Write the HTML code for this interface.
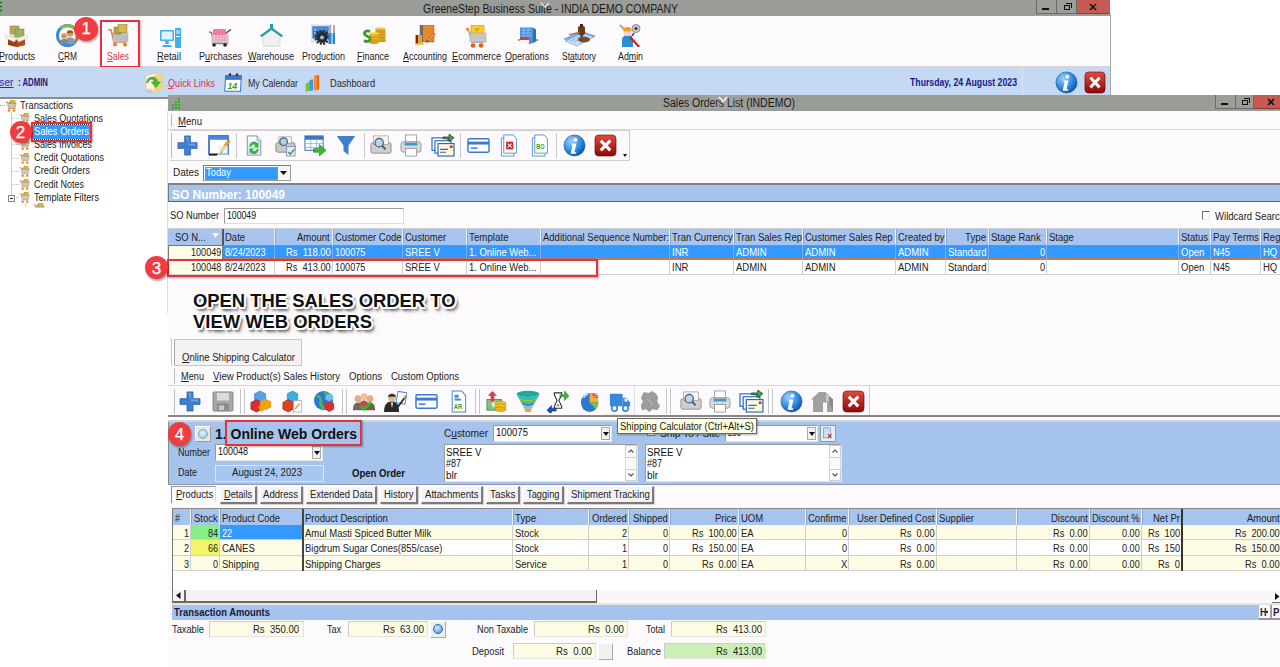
<!DOCTYPE html><html><head><meta charset="utf-8"><style>*{margin:0;padding:0}
html,body{width:1280px;height:667px;overflow:hidden;background:#fdfafd}
body{position:relative;font-family:"Liberation Sans",sans-serif}
.t{position:absolute;white-space:pre}
.r{position:absolute}
u{text-decoration:underline}
</style></head><body><div class="r" style="left:0px;top:0px;width:1110px;height:16px;background:#9a9c98;"></div><div class="r" style="left:0px;top:2px;width:2px;height:12px;background:#3a3a3a;"></div><div class="r" style="left:0px;top:3px;width:1.5px;height:3px;background:#4cc84c;"></div><div class="r" style="left:0px;top:7px;width:1.5px;height:3px;background:#4cc84c;"></div><div class="r" style="left:0px;top:11px;width:1.5px;height:2.5px;background:#4cc84c;"></div><div class="t" style="left:423.00px;top:3.34px;font-size:12px;line-height:12px;transform:scaleX(0.8736);transform-origin:0 0;color:#1a1a1a;">GreeneStep Business Suite - INDIA DEMO COMPANY</div><svg class="r" style="left:540px;top:2px;" width="10" height="6" viewBox="0 0 10 6"><path d="M1 1l4 4 4-4" stroke="#e8e8e8" stroke-width="1.3" fill="none"/></svg><div class="r" style="left:1036px;top:0px;width:21px;height:14px;background:#9c9e9a;border:1px solid #6a6c68;box-sizing:border-box;border-top:none;"></div><div class="r" style="left:1056px;top:0px;width:21px;height:14px;background:#9c9e9a;border:1px solid #6a6c68;box-sizing:border-box;border-top:none;"></div><div class="r" style="left:1077px;top:0px;width:33px;height:14px;background:#c75a52;border-bottom:1px solid #8a3a34;box-sizing:border-box;"></div><div class="r" style="left:1042px;top:8px;width:7px;height:2px;background:#111;"></div><div class="r" style="left:1064px;top:5px;width:6px;height:5px;border:1.5px solid #111;box-sizing:border-box;"></div><div class="r" style="left:1066px;top:3px;width:6px;height:5px;border-top:1.5px solid #111;border-right:1.5px solid #111;box-sizing:border-box;"></div><svg class="r" style="left:1089px;top:3px;" width="8" height="8" viewBox="0 0 8 8"><path d="M1 1L7 7M7 1L1 7" stroke="#111" stroke-width="1.6"/></svg><div class="r" style="left:1110px;top:0px;width:170px;height:95px;background:#ffffff;"></div><div class="r" style="left:1109px;top:14px;width:2px;height:81px;background:#a8a8a8;"></div><div class="r" style="left:0px;top:16px;width:1110px;height:50px;background:#fdfafd;"></div><div class="r" style="left:0px;top:66px;width:1110px;height:1px;background:#d4d4d4;"></div><div class="t" style="left:-1.00px;top:51.53px;font-size:10px;line-height:10px;transform:scaleX(0.9122);transform-origin:0 0;color:#222;"><u>P</u>roducts</div><div class="t" style="left:57.50px;top:51.53px;font-size:10px;line-height:10px;transform:scaleX(0.8343);transform-origin:0 0;color:#222;"><u>C</u>RM</div><div class="t" style="left:107.00px;top:51.53px;font-size:10px;line-height:10px;transform:scaleX(0.8795);transform-origin:0 0;color:#e8384a;"><u>S</u>ales</div><div class="t" style="left:157.00px;top:51.53px;font-size:10px;line-height:10px;transform:scaleX(0.9387);transform-origin:0 0;color:#222;"><u>R</u>etail</div><div class="t" style="left:198.50px;top:51.53px;font-size:10px;line-height:10px;transform:scaleX(0.9101);transform-origin:0 0;color:#222;">P<u>u</u>rchases</div><div class="t" style="left:248.00px;top:51.53px;font-size:10px;line-height:10px;transform:scaleX(0.9061);transform-origin:0 0;color:#222;"><u>W</u>arehouse</div><div class="t" style="left:301.50px;top:51.53px;font-size:10px;line-height:10px;transform:scaleX(0.8994);transform-origin:0 0;color:#222;">Pro<u>d</u>uction</div><div class="t" style="left:357.00px;top:51.53px;font-size:10px;line-height:10px;transform:scaleX(0.8994);transform-origin:0 0;color:#222;"><u>F</u>inance</div><div class="t" style="left:403.00px;top:51.53px;font-size:10px;line-height:10px;transform:scaleX(0.8893);transform-origin:0 0;color:#222;"><u>A</u>ccounting</div><div class="t" style="left:451.50px;top:51.53px;font-size:10px;line-height:10px;transform:scaleX(0.9185);transform-origin:0 0;color:#222;"><u>E</u>commerce</div><div class="t" style="left:505.00px;top:51.53px;font-size:10px;line-height:10px;transform:scaleX(0.8995);transform-origin:0 0;color:#222;"><u>O</u>perations</div><div class="t" style="left:562.00px;top:51.53px;font-size:10px;line-height:10px;transform:scaleX(0.8496);transform-origin:0 0;color:#222;">St<u>a</u>tutory</div><div class="t" style="left:617.50px;top:51.53px;font-size:10px;line-height:10px;transform:scaleX(0.8820);transform-origin:0 0;color:#222;">Ad<u>m</u>in</div><svg class="r" style="left:5px;top:25px" width="23" height="22" viewBox="0 0 23 22"><path d="M3 11l8.5-3 8.5 3-8.5 4z" fill="#e8dcc0"/><rect x="5" y="1" width="9" height="8" fill="#b8a468" stroke="#8a7a40" stroke-width=".5"/><rect x="10" y="4" width="9" height="8" fill="#9cb060" stroke="#6a8030" stroke-width=".5"/><path d="M3 12l8.5 3 8.5-3v8l-8.5 2-8.5-2z" fill="#a03c14"/><path d="M11.5 15v7l8.5-2v-8z" fill="#b84a1a"/><path d="M0 9.5l11.5 4-2 3.5L0 13zM23 9.5l-11.5 4 2 3.5L23 13z" fill="#f4efe4" stroke="#d4ccbc" stroke-width=".4"/></svg><svg class="r" style="left:56px;top:24px" width="23" height="23" viewBox="0 0 23 23"><circle cx="11.5" cy="11.5" r="10" fill="none" stroke="#3a8ad8" stroke-width="3"/><path d="M4.5 4.5a10 10 0 0 1 14 0" stroke="#7ac040" stroke-width="3" fill="none"/><path d="M21 8a10 10 0 0 1-1.5 9" stroke="#e87a20" stroke-width="3" fill="none"/><circle cx="14" cy="9.5" r="3.3" fill="#e0a060"/><path d="M14 6.2a3.3 3.3 0 0 1 3.3 3h-6.6a3.3 3.3 0 0 1 3.3-3z" fill="#a05a20"/><path d="M8.5 20c0-5 2-6.5 5.5-6.5s5.5 1.5 5.5 6.5z" fill="#8a9aaa"/><circle cx="8" cy="12" r="2.8" fill="#d89060"/><path d="M4 20c0-4 1.5-5 4-5s4 1 4 5z" fill="#7a8a9a"/></svg><svg class="r" style="left:107px;top:24px" width="23" height="23" viewBox="0 0 23 23"><path d="M1 5.5l3 .5 3 12h12" fill="none" stroke="#e07a3a" stroke-width="1.5"/><rect x="6" y="9" width="15" height="9" fill="#c4c6c8" stroke="#aaa" stroke-width=".5"/><path d="M7 12h14M7 15h14M10 9v9M13 9v9M16 9v9M19 9v9" stroke="#a8aaac" stroke-width=".5"/><rect x="7" y="3" width="7" height="7" fill="#c0a040" stroke="#8a7020" stroke-width=".5"/><rect x="11" y="0.5" width="9" height="8" fill="#d4b850" stroke="#8a7020" stroke-width=".5"/><circle cx="8" cy="20.5" r="2" fill="#f07a20"/><circle cx="18" cy="20.5" r="2" fill="#f07a20"/></svg><svg class="r" style="left:160px;top:28px" width="21" height="20" viewBox="0 0 21 20"><rect x="0" y="2" width="14" height="11" rx="1" fill="#3ab0f0"/><rect x="1.5" y="3.5" width="11" height="8" fill="#e0f2fc"/><path d="M5.5 13h3l.5 3h-4z" fill="#3ab0f0"/><path d="M3 17h8l1 2H2z" fill="#3ab0f0"/><rect x="15" y="0" width="6" height="20" rx="1" fill="#3ab0f0"/><rect x="16" y="2" width="4" height="4" fill="#8ad4f8"/><rect x="16" y="8" width="4" height="1" fill="#fff"/></svg><svg class="r" style="left:209px;top:28px" width="23" height="19" viewBox="0 0 23 19"><path d="M0 4l2.5.5 2.5 11h14" fill="none" stroke="#777" stroke-width="1.3"/><rect x="3" y="6" width="16" height="9" fill="#e4d0d8" stroke="#999" stroke-width=".6"/><path d="M4 9h15M4 12h15M7 6v9M10 6v9M13 6v9M16 6v9" stroke="#e890b0" stroke-width=".7"/><rect x="4" y="1" width="13" height="6" rx="1.5" fill="#f07aa0"/><path d="M17 5l5-3.5" stroke="#444" stroke-width="1.4"/><circle cx="5" cy="17" r="1.8" fill="#222"/><circle cx="16" cy="17" r="1.8" fill="#222"/></svg><svg class="r" style="left:260px;top:24px" width="23" height="23" viewBox="0 0 23 23"><path d="M3 11l8.5-6 8.5 6v11H3z" fill="#f0f0f0" stroke="#ccc" stroke-width=".6"/><path d="M0 11.5l11.5-8.5 11.5 8.5-1.5 1.8L11.5 6 1.5 13.3z" fill="#20a0a8"/><path d="M10 0h3v5h-3z" fill="#20a0a8"/><path d="M4 22h15" stroke="#ddd" stroke-width="1"/></svg><svg class="r" style="left:311px;top:24px" width="24" height="21" viewBox="0 0 24 21"><rect x="0" y="1" width="20" height="17" fill="#e4e8ee" stroke="#c8ccd0" stroke-width=".6"/><rect x="1.5" y="2.5" width="16" height="12" fill="#2a6ab8"/><rect x="1.5" y="2.5" width="16" height="4" fill="#4a8ad8"/><path d="M3 6h2M3 9h2M3 12h2" stroke="#cfe" stroke-width="1"/><circle cx="11" cy="13.5" r="5.5" fill="#2a2a2a"/><circle cx="11" cy="13.5" r="6.5" fill="none" stroke="#2a2a2a" stroke-width="2" stroke-dasharray="2 1.4"/><circle cx="11" cy="13.5" r="2" fill="#9ab8d8"/><rect x="18" y="1" width="2" height="8" fill="#aaa"/><rect x="17.5" y="9" width="3" height="11" fill="#2a8ad8"/><rect x="22" y="1" width="2" height="8" fill="#aaa"/><rect x="21.5" y="9" width="2.5" height="11" fill="#2a8ad8"/></svg><svg class="r" style="left:363px;top:27px" width="23" height="17" viewBox="0 0 23 17"><ellipse cx="17.5" cy="2" rx="5" ry="2" fill="#f8d860"/><rect x="12.5" y="2" width="10" height="13" fill="#e0a820"/><path d="M12.5 5h10M12.5 8h10M12.5 11h10M12.5 14h10" stroke="#b07810" stroke-width=".6"/><ellipse cx="11" cy="7" rx="5" ry="2" fill="#f8d860"/><rect x="6" y="7" width="10" height="8" fill="#e8b428"/><path d="M6 10h10M6 13h10" stroke="#b07810" stroke-width=".6"/><ellipse cx="11" cy="15" rx="5" ry="2" fill="#d8a020"/><path d="M7 4.5c-3-1.5-6 0-5.5 2.5s5 2 5.5 4.5-3 4-6 2" stroke="#3a9a2a" stroke-width="2.8" fill="none"/></svg><svg class="r" style="left:415px;top:25px" width="21" height="20" viewBox="0 0 21 20"><rect x="5" y="0" width="14" height="17" fill="#e8872a" stroke="#b05a10" stroke-width=".5"/><rect x="5" y="0" width="3" height="17" fill="#6a6a6a"/><rect x="0" y="10" width="7" height="9" fill="#d8b020"/><rect x="1" y="10" width="2" height="9" fill="#a01010"/><path d="M0 19h9" stroke="#e0c040" stroke-width="1.5"/><path d="M12 15l7-7 1.5 1.5-7 7z" fill="#f0a040" stroke="#6a4a20" stroke-width=".5"/><path d="M12 15l-1 2.5 2.5-1z" fill="#333"/></svg><svg class="r" style="left:466px;top:24px" width="21" height="24" viewBox="0 0 21 24"><rect x="5" y="1.5" width="13" height="8" fill="#f8d020" stroke="#d09010" stroke-width=".6"/><path d="M9 4l2 3 2-3" stroke="#a07010" fill="none" stroke-width=".7"/><path d="M0 5l2.5 1 3.5 12h12" fill="none" stroke="#999" stroke-width="1.3"/><rect x="4" y="9" width="16" height="9" fill="#c8c8c8" stroke="#999" stroke-width=".5"/><path d="M6 11.5h12M6 14h12" stroke="#f0b030" stroke-width="1" stroke-dasharray="1 1.8"/><circle cx="1.5" cy="5" r="1.5" fill="#f08020"/><circle cx="7" cy="21.5" r="2.3" fill="#e85a10"/><circle cx="15" cy="21.5" r="2.3" fill="#e85a10"/></svg><svg class="r" style="left:517px;top:26px" width="22" height="18" viewBox="0 0 22 18"><path d="M0 14l11-4 11 4-9 4z" fill="#5aa040"/><path d="M3 1.5h13l3 1.5v12l-3 2H3z" fill="#4a90e0"/><path d="M16 3l3 1v11l-3 2z" fill="#2a70c0"/><path d="M4 4h11M4 7h11M4 10h11M7 2v14M11 2v14" stroke="#a8d0f8" stroke-width=".6"/><rect x="3" y="11" width="9" height="3" fill="#e83a2a"/><rect x="3" y="14" width="9" height="3" fill="#f8f8f8"/></svg><svg class="r" style="left:564px;top:24px" width="31" height="23" viewBox="0 0 31 23"><path d="M0 15l17-8 14 5-17 9z" fill="#8ab8e8" stroke="#5a88c8" stroke-width=".6"/><path d="M1 17l17-8 12 4-17 9z" fill="#c8ddf4" stroke="#5a88c8" stroke-width=".5"/><path d="M4 15l14-6M6 17l14-6M9 18l12-5" stroke="#5a88c8" stroke-width=".5"/><rect x="14" y="2" width="7" height="9" rx="2" fill="#6a3a18"/><rect x="16" y="0" width="3" height="3" fill="#4a2810"/><rect x="16.5" y="10" width="2" height="4" fill="#333"/><ellipse cx="20" cy="15.5" rx="6" ry="3" fill="#7a4a28"/><rect x="5" y="9" width="11" height="1.3" fill="#a06a40" transform="rotate(-12 10 9)"/></svg><svg class="r" style="left:618px;top:24px" width="23" height="23" viewBox="0 0 23 23"><path d="M2 1l7 7" stroke="#aaa" stroke-width="2.2"/><circle cx="18" cy="4.5" r="4" fill="#ccc" stroke="#888" stroke-width="1"/><circle cx="18" cy="4.5" r="1.5" fill="#333"/><path d="M16 9l-2 3" stroke="#2a60c0" stroke-width="2"/><path d="M4 16c0-3 2.5-5 5.5-5s5.5 2 5.5 5v7H4z" fill="#2a90d0"/><circle cx="9.5" cy="8" r="4" fill="#fad8d0"/><path d="M5.5 7a4 4 0 0 1 8 0c-1.5-1.5-6.5-1.5-8 0z" fill="#f09a10"/><path d="M5.5 7.5c0-2.5 1.8-4 4-4s4 1.5 4 4" fill="#f0a020"/><path d="M13 12l9 10-1.8 1.5-9-10z" fill="#c81a1a"/><path d="M14 13l7 8" stroke="#fff" stroke-width=".6"/></svg><div class="r" style="left:100px;top:20px;width:40px;height:48px;border:2px solid #e8303a;box-sizing:border-box;box-shadow:1px 1px 2px rgba(0,0,0,.25);"></div><div class="r" style="left:0px;top:67px;width:1110px;height:28px;background:#c5d8f4;"></div><div class="t" style="left:-8.00px;top:77.53px;font-size:10px;line-height:10px;transform:scaleX(1.0183);transform-origin:0 0;color:#2a2a9a;text-decoration:underline;">User</div><div class="t" style="left:18.00px;top:77.53px;font-size:10px;line-height:10px;font-weight:bold;transform:scaleX(0.7790);transform-origin:0 0;color:#1a1a7a;">: ADMIN</div><svg class="r" style="left:144px;top:72px;" width="22" height="22" viewBox="0 0 24 24" preserveAspectRatio="none"><path d="M2 4l10-3 8 2v17l-10 3-8-2z" fill="#fff8d8" stroke="#c0b080" stroke-width=".6"/><path d="M11 3l9-1v18l-9 2z" fill="#f0d880"/><path d="M3 12a6 6 0 0 1 12-1h3l-5 6-5-6h3a3 3 0 0 0-6 0z" fill="#4ab83a" stroke="#2a7a1a" stroke-width=".5"/><path d="M0 20l6-2 6 3-6 2z" fill="#aac0e0" opacity=".7"/></svg><div class="t" style="left:168.00px;top:79.03px;font-size:10px;line-height:10px;transform:scaleX(0.9094);transform-origin:0 0;color:#e0304a;"><u>Q</u>uick Links</div><svg class="r" style="left:223px;top:72px;" width="21" height="21" viewBox="0 0 24 24" preserveAspectRatio="none"><path d="M3 4h18l-1 18H2z" fill="#fff" stroke="#3a78c8" stroke-width="1.2"/><rect x="3" y="4" width="18" height="5" fill="#3a78c8"/><circle cx="8" cy="3" r="1.5" fill="#333"/><circle cx="16" cy="3" r="1.5" fill="#333"/><text x="5" y="19" font-family="Liberation Sans" font-weight="bold" font-style="italic" font-size="10" fill="#3a9a2a">14</text></svg><div class="t" style="left:248.00px;top:79.03px;font-size:10px;line-height:10px;transform:scaleX(0.8820);transform-origin:0 0;color:#2a2a2a;">My Calendar</div><svg class="r" style="left:305px;top:75px;" width="17" height="17" viewBox="0 0 24 24" preserveAspectRatio="none"><path d="M1 12l3-1.5h2v11.5l-3 1.5H1z" fill="#7ac43a"/><path d="M6 8l3-1.5h2.5V21l-3 1.5H6z" fill="#3a9ae8"/><path d="M13 2l3-1.5h4V20l-3 1.5h-4z" fill="#f06a10"/><path d="M13 2h4v19.5h-4z" fill="#f8883a"/></svg><div class="t" style="left:330.00px;top:79.03px;font-size:10px;line-height:10px;transform:scaleX(0.9198);transform-origin:0 0;color:#2a2a2a;">Dashboard</div><div class="t" style="left:910.00px;top:77.53px;font-size:10px;line-height:10px;font-weight:bold;transform:scaleX(0.8712);transform-origin:0 0;color:#1a1a8a;">Thursday, 24 August 2023</div><div class="r" style="left:1022px;top:67px;width:1px;height:28px;background:#d8e4f4;"></div><svg class="r" style="left:1055px;top:71px;" width="23" height="23" viewBox="0 0 24 24" preserveAspectRatio="none"><defs><radialGradient id="gi" cx=".35" cy=".3" r=".8"><stop offset="0" stop-color="#9ad0ff"/><stop offset=".6" stop-color="#2a86e0"/><stop offset="1" stop-color="#0a4aa0"/></radialGradient></defs><circle cx="12" cy="12" r="11" fill="url(#gi)" stroke="#0a4a9a" stroke-width=".6"/><circle cx="13" cy="6" r="2" fill="#fff"/><path d="M9 10h5l-2 9h2l-.5 1.5H8l2-9H9z" fill="#fff"/></svg><svg class="r" style="left:1084px;top:71px;" width="22" height="23" viewBox="0 0 24 24" preserveAspectRatio="none"><defs><linearGradient id="gc" x1="0" y1="0" x2="0" y2="1"><stop offset="0" stop-color="#e24a3a"/><stop offset="1" stop-color="#8a0a0a"/></linearGradient></defs><rect x="1" y="1" width="22" height="22" rx="4" fill="url(#gc)" stroke="#6a0000" stroke-width=".6"/><path d="M7 7l10 10M17 7L7 17" stroke="#fff" stroke-width="3.2"/></svg><div class="r" style="left:0px;top:95px;width:168px;height:572px;background:#ffffff;"></div><div class="r" style="left:0px;top:95px;width:168px;height:2px;background:#c5d8f4;"></div><div class="r" style="left:0px;top:97px;width:168px;height:2px;background:#8c8c8c;"></div><div class="r" style="left:11px;top:112px;width:1px;height:84px;background:#cfcfcf;"></div><div class="r" style="left:0px;top:105px;width:5px;height:1px;border-top:1px dotted #999;"></div><svg class="r" style="left:5px;top:100px;" width="12" height="12" viewBox="0 0 24 24" preserveAspectRatio="none"><path d="M1 4h4l2 13h13l2-11H6" fill="#c8ccd0" stroke="#d8905a" stroke-width="2"/><rect x="8" y="3" width="6" height="5" fill="#c0a030"/><rect x="11" y="0" width="9" height="8" fill="#d8b838" stroke="#9a7a10" stroke-width=".6"/><rect x="7" y="8" width="14" height="8" fill="#c4c8cc"/><circle cx="8" cy="21" r="2.6" fill="#f07a20"/><circle cx="18" cy="21" r="2.6" fill="#f07a20"/></svg><div class="t" style="left:20.00px;top:100.53px;font-size:10px;line-height:10px;transform:scaleX(0.9318);transform-origin:0 0;color:#222;">Transactions</div><div class="r" style="left:12px;top:118px;width:7px;height:1px;border-top:1px dotted #bbb;"></div><svg class="r" style="left:19px;top:113px;" width="11" height="11" viewBox="0 0 24 24" preserveAspectRatio="none"><path d="M1 4h4l2 13h13l2-11H6" fill="#c8ccd0" stroke="#d8905a" stroke-width="2"/><rect x="8" y="3" width="6" height="5" fill="#c0a030"/><rect x="11" y="0" width="9" height="8" fill="#d8b838" stroke="#9a7a10" stroke-width=".6"/><rect x="7" y="8" width="14" height="8" fill="#c4c8cc"/><circle cx="8" cy="21" r="2.6" fill="#f07a20"/><circle cx="18" cy="21" r="2.6" fill="#f07a20"/></svg><div class="t" style="left:34.00px;top:113.53px;font-size:10px;line-height:10px;transform:scaleX(0.9060);transform-origin:0 0;color:#222;">Sales Quotations</div><div class="r" style="left:12px;top:131px;width:7px;height:1px;border-top:1px dotted #bbb;"></div><svg class="r" style="left:19px;top:126px;" width="11" height="11" viewBox="0 0 24 24" preserveAspectRatio="none"><path d="M1 4h4l2 13h13l2-11H6" fill="#c8ccd0" stroke="#d8905a" stroke-width="2"/><rect x="8" y="3" width="6" height="5" fill="#c0a030"/><rect x="11" y="0" width="9" height="8" fill="#d8b838" stroke="#9a7a10" stroke-width=".6"/><rect x="7" y="8" width="14" height="8" fill="#c4c8cc"/><circle cx="8" cy="21" r="2.6" fill="#f07a20"/><circle cx="18" cy="21" r="2.6" fill="#f07a20"/></svg><div class="r" style="left:33px;top:125px;width:57px;height:14px;background:#3399ff;outline:1px dotted #333;"></div><div class="t" style="left:34.00px;top:126.53px;font-size:10px;line-height:10px;transform:scaleX(0.9425);transform-origin:0 0;color:#fff;">Sales Orders</div><div class="r" style="left:12px;top:144px;width:7px;height:1px;border-top:1px dotted #bbb;"></div><svg class="r" style="left:19px;top:139px;" width="11" height="11" viewBox="0 0 24 24" preserveAspectRatio="none"><path d="M1 4h4l2 13h13l2-11H6" fill="#c8ccd0" stroke="#d8905a" stroke-width="2"/><rect x="8" y="3" width="6" height="5" fill="#c0a030"/><rect x="11" y="0" width="9" height="8" fill="#d8b838" stroke="#9a7a10" stroke-width=".6"/><rect x="7" y="8" width="14" height="8" fill="#c4c8cc"/><circle cx="8" cy="21" r="2.6" fill="#f07a20"/><circle cx="18" cy="21" r="2.6" fill="#f07a20"/></svg><div class="t" style="left:34.00px;top:139.53px;font-size:10px;line-height:10px;transform:scaleX(0.8995);transform-origin:0 0;color:#222;">Sales Invoices</div><div class="r" style="left:12px;top:158px;width:7px;height:1px;border-top:1px dotted #bbb;"></div><svg class="r" style="left:19px;top:153px;" width="11" height="11" viewBox="0 0 24 24" preserveAspectRatio="none"><path d="M1 4h4l2 13h13l2-11H6" fill="#c8ccd0" stroke="#d8905a" stroke-width="2"/><rect x="8" y="3" width="6" height="5" fill="#c0a030"/><rect x="11" y="0" width="9" height="8" fill="#d8b838" stroke="#9a7a10" stroke-width=".6"/><rect x="7" y="8" width="14" height="8" fill="#c4c8cc"/><circle cx="8" cy="21" r="2.6" fill="#f07a20"/><circle cx="18" cy="21" r="2.6" fill="#f07a20"/></svg><div class="t" style="left:34.00px;top:153.03px;font-size:10px;line-height:10px;transform:scaleX(0.8995);transform-origin:0 0;color:#222;">Credit Quotations</div><div class="r" style="left:12px;top:171px;width:7px;height:1px;border-top:1px dotted #bbb;"></div><svg class="r" style="left:19px;top:166px;" width="11" height="11" viewBox="0 0 24 24" preserveAspectRatio="none"><path d="M1 4h4l2 13h13l2-11H6" fill="#c8ccd0" stroke="#d8905a" stroke-width="2"/><rect x="8" y="3" width="6" height="5" fill="#c0a030"/><rect x="11" y="0" width="9" height="8" fill="#d8b838" stroke="#9a7a10" stroke-width=".6"/><rect x="7" y="8" width="14" height="8" fill="#c4c8cc"/><circle cx="8" cy="21" r="2.6" fill="#f07a20"/><circle cx="18" cy="21" r="2.6" fill="#f07a20"/></svg><div class="t" style="left:34.00px;top:166.03px;font-size:10px;line-height:10px;transform:scaleX(0.9331);transform-origin:0 0;color:#222;">Credit Orders</div><div class="r" style="left:12px;top:184px;width:7px;height:1px;border-top:1px dotted #bbb;"></div><svg class="r" style="left:19px;top:179px;" width="11" height="11" viewBox="0 0 24 24" preserveAspectRatio="none"><path d="M1 4h4l2 13h13l2-11H6" fill="#c8ccd0" stroke="#d8905a" stroke-width="2"/><rect x="8" y="3" width="6" height="5" fill="#c0a030"/><rect x="11" y="0" width="9" height="8" fill="#d8b838" stroke="#9a7a10" stroke-width=".6"/><rect x="7" y="8" width="14" height="8" fill="#c4c8cc"/><circle cx="8" cy="21" r="2.6" fill="#f07a20"/><circle cx="18" cy="21" r="2.6" fill="#f07a20"/></svg><div class="t" style="left:34.00px;top:179.53px;font-size:10px;line-height:10px;transform:scaleX(0.8996);transform-origin:0 0;color:#222;">Credit Notes</div><div class="r" style="left:12px;top:197px;width:7px;height:1px;border-top:1px dotted #bbb;"></div><svg class="r" style="left:19px;top:192px;" width="11" height="11" viewBox="0 0 24 24" preserveAspectRatio="none"><path d="M1 4h4l2 13h13l2-11H6" fill="#c8ccd0" stroke="#d8905a" stroke-width="2"/><rect x="8" y="3" width="6" height="5" fill="#c0a030"/><rect x="11" y="0" width="9" height="8" fill="#d8b838" stroke="#9a7a10" stroke-width=".6"/><rect x="7" y="8" width="14" height="8" fill="#c4c8cc"/><circle cx="8" cy="21" r="2.6" fill="#f07a20"/><circle cx="18" cy="21" r="2.6" fill="#f07a20"/></svg><div class="t" style="left:34.00px;top:192.53px;font-size:10px;line-height:10px;transform:scaleX(0.9210);transform-origin:0 0;color:#222;">Template Filters</div><div class="r" style="left:8px;top:195px;width:7px;height:7px;background:#fff;border:1px solid #888;box-sizing:border-box;"></div><div class="r" style="left:10px;top:198px;width:3px;height:1px;background:#333;"></div><svg class="r" style="left:33px;top:203px;" width="12" height="11" viewBox="0 0 24 24" preserveAspectRatio="none"><path d="M1 4h4l2 13h13l2-11H6" fill="#c8ccd0" stroke="#d8905a" stroke-width="2"/><rect x="8" y="3" width="6" height="5" fill="#c0a030"/><rect x="11" y="0" width="9" height="8" fill="#d8b838" stroke="#9a7a10" stroke-width=".6"/><rect x="7" y="8" width="14" height="8" fill="#c4c8cc"/><circle cx="8" cy="21" r="2.6" fill="#f07a20"/><circle cx="18" cy="21" r="2.6" fill="#f07a20"/></svg><div class="r" style="left:0px;top:207.5px;width:168px;height:459.5px;background:#ffffff;"></div><div class="r" style="left:25px;top:203px;width:1px;height:4px;background:#ccc;"></div><div class="r" style="left:31px;top:122px;width:61px;height:20px;border:2px solid #e8303a;box-sizing:border-box;box-shadow:1px 1px 2px rgba(0,0,0,.3);"></div><div class="r" style="left:168px;top:95px;width:1112px;height:218px;background:#fdfafd;"></div><div class="r" style="left:167px;top:111px;width:1px;height:202px;background:#dedede;"></div><div class="r" style="left:168px;top:95px;width:1112px;height:16px;background:#9a9c98;"></div><svg class="r" style="left:170px;top:97px" width="12" height="12"><rect x="8" y="1" width="2" height="2" fill="#1fb81f"/><rect x="5" y="4" width="2" height="2" fill="#1fb81f"/><rect x="8" y="4" width="2" height="2" fill="#1fb81f"/><rect x="2" y="7" width="2" height="2" fill="#1fb81f"/><rect x="5" y="7" width="2" height="2" fill="#1fb81f"/><rect x="8" y="7" width="2" height="2" fill="#1fb81f"/><rect x="2" y="10" width="2" height="2" fill="#1fb81f"/><rect x="5" y="10" width="2" height="2" fill="#1fb81f"/><rect x="8" y="10" width="2" height="2" fill="#1fb81f"/></svg><div class="t" style="left:663.00px;top:97.34px;font-size:12px;line-height:12px;transform:scaleX(0.8721);transform-origin:0 0;color:#1a1a1a;">Sales Orders List (INDEMO)</div><div class="r" style="left:706px;top:95px;width:33px;height:14px;background:rgba(255,255,255,0.07);"></div><svg class="r" style="left:718px;top:96px;" width="10" height="7" viewBox="0 0 10 7"><path d="M1 1l4 4.5 4-4.5" stroke="#f0f0f0" stroke-width="1.8" fill="none"/></svg><div class="r" style="left:1215px;top:95px;width:21px;height:14px;background:#9c9e9a;border:1px solid #6a6c68;box-sizing:border-box;border-top:none;"></div><div class="r" style="left:1235px;top:95px;width:19px;height:14px;background:#9c9e9a;border:1px solid #6a6c68;box-sizing:border-box;border-top:none;"></div><div class="r" style="left:1254px;top:95px;width:34px;height:14px;background:#c75a52;border-bottom:1px solid #8a3a34;box-sizing:border-box;"></div><div class="r" style="left:1221px;top:103px;width:7px;height:2px;background:#111;"></div><div class="r" style="left:1242px;top:100px;width:6px;height:5px;border:1.5px solid #111;box-sizing:border-box;"></div><div class="r" style="left:1244px;top:98px;width:6px;height:5px;border-top:1.5px solid #111;border-right:1.5px solid #111;box-sizing:border-box;"></div><svg class="r" style="left:1267px;top:98px;" width="8" height="8" viewBox="0 0 8 8"><path d="M1 1L7 7M7 1L1 7" stroke="#111" stroke-width="1.6"/></svg><div class="r" style="left:171px;top:114px;width:1px;height:13px;background:#bbb;"></div><div class="t" style="left:177.50px;top:116.53px;font-size:10px;line-height:10px;transform:scaleX(0.9594);transform-origin:0 0;color:#222;"><u>M</u>enu</div><div class="r" style="left:168px;top:129px;width:1112px;height:1px;background:#d8d8d8;"></div><div class="r" style="left:170px;top:130px;width:460px;height:31px;border:1px solid #cfcfcf;border-left:none;box-sizing:border-box;"></div><div class="r" style="left:171px;top:133px;width:1px;height:25px;background:#bbb;"></div><div class="r" style="left:236px;top:133px;width:1px;height:25px;background:#c8c8c8;"></div><div class="r" style="left:364px;top:133px;width:1px;height:25px;background:#c8c8c8;"></div><div class="r" style="left:460px;top:133px;width:1px;height:25px;background:#c8c8c8;"></div><div class="r" style="left:556px;top:133px;width:1px;height:25px;background:#c8c8c8;"></div><svg class="r" style="left:176px;top:134px;" width="23" height="23" viewBox="0 0 24 24" preserveAspectRatio="none"><path d="M9 2h6v7h7v6h-7v7H9v-7H2V9h7z" fill="#3f7fd0" stroke="#2a5fae" stroke-width="0.8"/><path d="M10 3h3v7h7v2h-7v-2" fill="#8ab8f0" opacity=".6"/></svg><svg class="r" style="left:207px;top:134px;" width="24" height="23" viewBox="0 0 24 24" preserveAspectRatio="none"><rect x="2" y="2" width="19" height="19" fill="#fff" stroke="#2a62c0" stroke-width="1.6"/><rect x="2" y="2" width="19" height="4" fill="#4a86d8"/><path d="M2 21h8v1.5H2z" fill="#111"/><path d="M13 21l2-6 6-9 2 1.5-6 9z" fill="#f0b030" stroke="#a06a10" stroke-width=".6"/><path d="M13 21l1-3 2 1z" fill="#555"/><rect x="11" y="12" width="10" height="10" fill="#e8f0d8" opacity=".6"/></svg><svg class="r" style="left:245px;top:134px;" width="18" height="23" viewBox="0 0 24 24" preserveAspectRatio="none"><path d="M3 2h13l5 5v15H3z" fill="#fff" stroke="#6a7a9a" stroke-width="1"/><path d="M16 2v5h5" fill="#e8e8e8" stroke="#6a7a9a" stroke-width=".8"/><rect x="4" y="8" width="16" height="13" fill="#d8ecf8"/><path d="M6 13a6 6 0 0 1 10.5-3l1.5-2v6h-6l2-1.8a3.5 3.5 0 0 0-6 1.3z" fill="#3ab03a"/><path d="M18 16a6 6 0 0 1-10.5 3L6 21v-6h6l-2 1.8a3.5 3.5 0 0 0 6-1.3z" fill="#3ab03a"/></svg><svg class="r" style="left:274px;top:134px;" width="23" height="23" viewBox="0 0 24 24" preserveAspectRatio="none"><rect x="2" y="9" width="20" height="10" rx="2" fill="#c8c8c8" stroke="#777" stroke-width=".8"/><rect x="5" y="3" width="13" height="7" fill="#f4f4f4" stroke="#888" stroke-width=".6"/><circle cx="10" cy="8" r="4" fill="#a8d0f0" stroke="#555" stroke-width="1.2"/><rect x="13" y="13" width="9" height="10" fill="#e0e8f4" stroke="#6a7ab0" stroke-width=".7"/><path d="M15 19l2 2 4-5" stroke="#3a9a3a" stroke-width="1.5" fill="none"/></svg><svg class="r" style="left:304px;top:134px;" width="23" height="23" viewBox="0 0 24 24" preserveAspectRatio="none"><rect x="1" y="2" width="19" height="15" fill="#fff" stroke="#3a6ab8" stroke-width="1"/><rect x="1" y="2" width="19" height="4" fill="#3a76c8"/><path d="M1 10h19M1 14h19M7 6v11M13 6v11" stroke="#8aa8d8" stroke-width=".8"/><path d="M10 15h6v-4l7 6-7 6v-4h-6z" fill="#3cb83c" stroke="#1f7a1f" stroke-width=".6"/></svg><svg class="r" style="left:336px;top:134px;" width="20" height="23" viewBox="0 0 24 24" preserveAspectRatio="none"><path d="M1 2h22l-8 10v10l-6-4v-6z" fill="#3f7fcf"/></svg><svg class="r" style="left:370px;top:134px;" width="22" height="23" viewBox="0 0 24 24" preserveAspectRatio="none"><rect x="1" y="9" width="22" height="11" rx="2" fill="#cfcfcf" stroke="#7a7a7a" stroke-width=".8"/><rect x="4" y="2" width="16" height="9" fill="#f4f4f4" stroke="#888" stroke-width=".6"/><circle cx="10" cy="9" r="4.5" fill="#b4d8f4" stroke="#555" stroke-width="1.3"/><path d="M13 12l4 4" stroke="#555" stroke-width="2"/></svg><svg class="r" style="left:400px;top:134px;" width="22" height="23" viewBox="0 0 24 24" preserveAspectRatio="none"><rect x="6" y="1" width="12" height="9" fill="#fff" stroke="#888" stroke-width=".8"/><rect x="1" y="8" width="22" height="11" rx="3" fill="#d8d8d8" stroke="#888" stroke-width=".8"/><rect x="5" y="9" width="14" height="3" fill="#3a9ad8"/><rect x="6" y="15" width="12" height="8" fill="#fff" stroke="#888" stroke-width=".8"/></svg><svg class="r" style="left:431px;top:134px;" width="24" height="23" viewBox="0 0 24 24" preserveAspectRatio="none"><rect x="1" y="4" width="16" height="13" fill="#fff" stroke="#2a6ac0" stroke-width="1.2"/><rect x="4" y="7" width="16" height="13" fill="#fff" stroke="#2a6ac0" stroke-width="1.2"/><rect x="7" y="10" width="16" height="13" fill="#fff6d8" stroke="#2a6ac0" stroke-width="1.2"/><path d="M9 16h8M9 19h6" stroke="#2a6ac0" stroke-width="1.2"/><rect x="19" y="12" width="2.5" height="2.5" fill="#d02020"/><path d="M12 3h6V0l5 4-5 4V5h-6z" fill="#2cb040" stroke="#111" stroke-width=".6"/></svg><svg class="r" style="left:467px;top:134px;" width="23" height="23" viewBox="0 0 24 24" preserveAspectRatio="none"><rect x="1" y="5" width="22" height="14" rx="1.5" fill="#fff" stroke="#3a7ad0" stroke-width="1.5"/><rect x="1" y="8" width="22" height="3" fill="#3a7ad0"/><rect x="4" y="14" width="7" height="1.5" fill="#3a7ad0"/></svg><svg class="r" style="left:499px;top:134px;" width="19" height="23" viewBox="0 0 24 24" preserveAspectRatio="none"><path d="M3 4h12l4 4v15H3z" fill="#fff" stroke="#4a8ad8" stroke-width="1"/><path d="M6 1h12l4 4v15H6z" fill="#fff" stroke="#4a8ad8" stroke-width="1"/><rect x="9" y="8" width="9" height="8" fill="#e02020"/><path d="M11 10l5 4M16 10l-5 4" stroke="#fff" stroke-width="1.2"/></svg><svg class="r" style="left:530px;top:134px;" width="19" height="23" viewBox="0 0 24 24" preserveAspectRatio="none"><path d="M3 4h12l4 4v15H3z" fill="#fff" stroke="#4a8ad8" stroke-width="1"/><path d="M6 1h12l4 4v15H6z" fill="#fff" stroke="#4a8ad8" stroke-width="1"/><text x="8" y="16" font-family="Liberation Sans" font-weight="bold" font-size="7" fill="#2ca02c">BO</text></svg><svg class="r" style="left:563px;top:134px;" width="23" height="23" viewBox="0 0 24 24" preserveAspectRatio="none"><defs><radialGradient id="gi" cx=".35" cy=".3" r=".8"><stop offset="0" stop-color="#9ad0ff"/><stop offset=".6" stop-color="#2a86e0"/><stop offset="1" stop-color="#0a4aa0"/></radialGradient></defs><circle cx="12" cy="12" r="11" fill="url(#gi)" stroke="#0a4a9a" stroke-width=".6"/><circle cx="13" cy="6" r="2" fill="#fff"/><path d="M9 10h5l-2 9h2l-.5 1.5H8l2-9H9z" fill="#fff"/></svg><svg class="r" style="left:594px;top:134px;" width="23" height="23" viewBox="0 0 24 24" preserveAspectRatio="none"><defs><linearGradient id="gc" x1="0" y1="0" x2="0" y2="1"><stop offset="0" stop-color="#e24a3a"/><stop offset="1" stop-color="#8a0a0a"/></linearGradient></defs><rect x="1" y="1" width="22" height="22" rx="4" fill="url(#gc)" stroke="#6a0000" stroke-width=".6"/><path d="M7 7l10 10M17 7L7 17" stroke="#fff" stroke-width="3.2"/></svg><svg class="r" style="left:623px;top:154px;" width="4" height="3" viewBox="0 0 4 3"><path d="M0 0h4l-2 3z" fill="#111"/></svg><div class="t" style="left:173.00px;top:168.03px;font-size:10px;line-height:10px;transform:scaleX(0.9953);transform-origin:0 0;color:#222;">Dates</div><div class="r" style="left:203px;top:164.5px;width:88px;height:16.0px;background:#fff;border:1.5px solid #9a9a9a;border-top-color:#7a7a7a;border-left-color:#7a7a7a;box-sizing:border-box;"></div><div class="r" style="left:204.5px;top:166.5px;width:73.0px;height:13.0px;background:#3399ff;border:1px solid #b08a6a;box-sizing:border-box;"></div><div class="t" style="left:206.00px;top:168.03px;font-size:10px;line-height:10px;transform:scaleX(0.9369);transform-origin:0 0;color:#fff;">Today</div><div class="r" style="left:277.5px;top:166px;width:12.0px;height:13px;background:#f6f6f6;"></div><svg class="r" style="left:280px;top:171px;" width="7" height="4" viewBox="0 0 7 4"><path d="M0 0h7l-3.5 4z" fill="#111"/></svg><div class="r" style="left:168px;top:183px;width:1112px;height:19px;background:#a5c3ec;border-top:2px solid #828282;border-bottom:1.5px solid #5a6470;border-left:1px solid #777;box-sizing:border-box;"></div><div class="t" style="left:172.00px;top:189.42px;font-size:12.5px;line-height:12.5px;font-weight:bold;transform:scaleX(0.9567);transform-origin:0 0;color:#fff;">SO Number: 100049</div><div class="t" style="left:170.00px;top:210.53px;font-size:10px;line-height:10px;transform:scaleX(0.9281);transform-origin:0 0;color:#222;">SO Number</div><div class="r" style="left:224px;top:208px;width:180px;height:16px;background:#fff;border:1px solid #9a9a9a;border-right-color:#ddd;border-bottom-color:#ddd;box-sizing:border-box;"></div><div class="t" style="left:227.00px;top:210.53px;font-size:10px;line-height:10px;transform:scaleX(0.8690);transform-origin:0 0;color:#111;">100049</div><div class="r" style="left:1202px;top:211px;width:8px;height:9px;background:#fff;border:1px solid #e8e8e8;border-top-color:#6a6a6a;border-left-color:#6a6a6a;box-sizing:border-box;"></div><div class="t" style="left:1215.00px;top:211.53px;font-size:10px;line-height:10px;transform:scaleX(0.9542);transform-origin:0 0;color:#222;">Wildcard Search</div><div class="r" style="left:168px;top:228px;width:1112px;height:17px;background:#a6c4ee;border-top:1px solid #cfcfcf;box-sizing:border-box;"></div><div class="r" style="left:222px;top:229px;width:2px;height:15px;border-left:1px solid #eef3fb;border-right:1px solid #8aa6cc;box-sizing:border-box;"></div><div class="t" style="left:175.00px;top:232.53px;font-size:10px;line-height:10px;transform:scaleX(0.9398);transform-origin:0 0;color:#222;">SO N...</div><svg class="r" style="left:212px;top:233px;" width="7" height="5" viewBox="0 0 7 5"><path d="M0 0h7l-3.5 5z" fill="#fff" stroke="#ccc" stroke-width=".5"/></svg><div class="r" style="left:274px;top:229px;width:2px;height:15px;border-left:1px solid #eef3fb;border-right:1px solid #8aa6cc;box-sizing:border-box;"></div><div class="t" style="left:225.00px;top:232.53px;font-size:10px;line-height:10px;transform:scaleX(0.9500);transform-origin:0 0;color:#222;">Date</div><div class="r" style="left:332px;top:229px;width:2px;height:15px;border-left:1px solid #eef3fb;border-right:1px solid #8aa6cc;box-sizing:border-box;"></div><div class="t" style="left:297.26px;top:232.53px;font-size:10px;line-height:10px;transform:scaleX(0.9500);transform-origin:0 0;color:#222;">Amount</div><div class="r" style="left:402px;top:229px;width:2px;height:15px;border-left:1px solid #eef3fb;border-right:1px solid #8aa6cc;box-sizing:border-box;"></div><div class="t" style="left:335.00px;top:232.53px;font-size:10px;line-height:10px;transform:scaleX(0.9500);transform-origin:0 0;color:#222;">Customer Code</div><div class="r" style="left:466px;top:229px;width:2px;height:15px;border-left:1px solid #eef3fb;border-right:1px solid #8aa6cc;box-sizing:border-box;"></div><div class="t" style="left:405.00px;top:232.53px;font-size:10px;line-height:10px;transform:scaleX(0.9500);transform-origin:0 0;color:#222;">Customer</div><div class="r" style="left:540px;top:229px;width:2px;height:15px;border-left:1px solid #eef3fb;border-right:1px solid #8aa6cc;box-sizing:border-box;"></div><div class="t" style="left:469.00px;top:232.53px;font-size:10px;line-height:10px;transform:scaleX(0.9760);transform-origin:0 0;color:#222;">Template</div><div class="r" style="left:669px;top:229px;width:2px;height:15px;border-left:1px solid #eef3fb;border-right:1px solid #8aa6cc;box-sizing:border-box;"></div><div class="t" style="left:543.00px;top:232.53px;font-size:10px;line-height:10px;transform:scaleX(0.9492);transform-origin:0 0;color:#222;">Additional Sequence Number:</div><div class="r" style="left:733px;top:229px;width:2px;height:15px;border-left:1px solid #eef3fb;border-right:1px solid #8aa6cc;box-sizing:border-box;"></div><div class="t" style="left:672.00px;top:232.53px;font-size:10px;line-height:10px;transform:scaleX(0.9555);transform-origin:0 0;color:#222;">Tran Currency</div><div class="r" style="left:802px;top:229px;width:2px;height:15px;border-left:1px solid #eef3fb;border-right:1px solid #8aa6cc;box-sizing:border-box;"></div><div class="t" style="left:736.00px;top:232.53px;font-size:10px;line-height:10px;transform:scaleX(0.9551);transform-origin:0 0;color:#222;">Tran Sales Rep</div><div class="r" style="left:895px;top:229px;width:2px;height:15px;border-left:1px solid #eef3fb;border-right:1px solid #8aa6cc;box-sizing:border-box;"></div><div class="t" style="left:805.00px;top:232.53px;font-size:10px;line-height:10px;transform:scaleX(0.9500);transform-origin:0 0;color:#222;">Customer Sales Rep</div><div class="r" style="left:945px;top:229px;width:2px;height:15px;border-left:1px solid #eef3fb;border-right:1px solid #8aa6cc;box-sizing:border-box;"></div><div class="t" style="left:898.00px;top:232.53px;font-size:10px;line-height:10px;transform:scaleX(0.9500);transform-origin:0 0;color:#222;">Created by</div><div class="r" style="left:988px;top:229px;width:2px;height:15px;border-left:1px solid #eef3fb;border-right:1px solid #8aa6cc;box-sizing:border-box;"></div><div class="t" style="left:964.88px;top:232.53px;font-size:10px;line-height:10px;transform:scaleX(0.9742);transform-origin:0 0;color:#222;">Type</div><div class="r" style="left:1046px;top:229px;width:2px;height:15px;border-left:1px solid #eef3fb;border-right:1px solid #8aa6cc;box-sizing:border-box;"></div><div class="t" style="left:991.00px;top:232.53px;font-size:10px;line-height:10px;transform:scaleX(0.9500);transform-origin:0 0;color:#222;">Stage Rank</div><div class="r" style="left:1178px;top:229px;width:2px;height:15px;border-left:1px solid #eef3fb;border-right:1px solid #8aa6cc;box-sizing:border-box;"></div><div class="t" style="left:1049.00px;top:232.53px;font-size:10px;line-height:10px;transform:scaleX(0.9500);transform-origin:0 0;color:#222;">Stage</div><div class="r" style="left:1210px;top:229px;width:2px;height:15px;border-left:1px solid #eef3fb;border-right:1px solid #8aa6cc;box-sizing:border-box;"></div><div class="t" style="left:1181.00px;top:232.53px;font-size:10px;line-height:10px;transform:scaleX(0.9500);transform-origin:0 0;color:#222;">Status</div><div class="r" style="left:1260px;top:229px;width:2px;height:15px;border-left:1px solid #eef3fb;border-right:1px solid #8aa6cc;box-sizing:border-box;"></div><div class="t" style="left:1213.00px;top:232.53px;font-size:10px;line-height:10px;transform:scaleX(0.9760);transform-origin:0 0;color:#222;">Pay Terms</div><div class="r" style="left:1299px;top:229px;width:2px;height:15px;border-left:1px solid #eef3fb;border-right:1px solid #8aa6cc;box-sizing:border-box;"></div><div class="t" style="left:1263.00px;top:232.53px;font-size:10px;line-height:10px;transform:scaleX(0.9500);transform-origin:0 0;color:#222;">Regi</div><div class="r" style="left:222px;top:229px;width:2px;height:46px;background:#555;"></div><div class="r" style="left:168px;top:245px;width:1112px;height:15px;background:#3399ff;"></div><div class="r" style="left:168px;top:258px;width:1112px;height:2px;background:#c07a5a;"></div><div class="r" style="left:168px;top:245px;width:1112px;height:1px;background:#c07a5a;"></div><div class="r" style="left:222px;top:245px;width:1px;height:15px;background:#7ab0e8;"></div><div class="r" style="left:168px;top:245px;width:55px;height:15px;background:#fffde6;border:1px solid #777;box-sizing:border-box;"></div><div class="t" style="left:190.63px;top:247.53px;font-size:10px;line-height:10px;transform:scaleX(0.9100);transform-origin:0 0;color:#222;">100049</div><div class="r" style="left:274px;top:245px;width:1px;height:15px;background:#7ab0e8;"></div><div class="t" style="left:225.00px;top:247.53px;font-size:10px;line-height:10px;transform:scaleX(0.9100);transform-origin:0 0;color:#fff;">8/24/2023</div><div class="r" style="left:332px;top:245px;width:1px;height:15px;background:#7ab0e8;"></div><div class="t" style="left:286.28px;top:247.53px;font-size:10px;line-height:10px;transform:scaleX(0.9391);transform-origin:0 0;color:#fff;">Rs  118.00</div><div class="r" style="left:402px;top:245px;width:1px;height:15px;background:#7ab0e8;"></div><div class="t" style="left:335.00px;top:247.53px;font-size:10px;line-height:10px;transform:scaleX(0.9100);transform-origin:0 0;color:#fff;">100075</div><div class="r" style="left:466px;top:245px;width:1px;height:15px;background:#7ab0e8;"></div><div class="t" style="left:405.00px;top:247.53px;font-size:10px;line-height:10px;transform:scaleX(0.9500);transform-origin:0 0;color:#fff;">SREE V</div><div class="r" style="left:540px;top:245px;width:1px;height:15px;background:#7ab0e8;"></div><div class="t" style="left:469.00px;top:247.53px;font-size:10px;line-height:10px;transform:scaleX(0.9431);transform-origin:0 0;color:#fff;">1. Online Web...</div><div class="r" style="left:669px;top:245px;width:1px;height:15px;background:#7ab0e8;"></div><div class="r" style="left:733px;top:245px;width:1px;height:15px;background:#7ab0e8;"></div><div class="t" style="left:672.00px;top:247.53px;font-size:10px;line-height:10px;transform:scaleX(0.9500);transform-origin:0 0;color:#fff;">INR</div><div class="r" style="left:802px;top:245px;width:1px;height:15px;background:#7ab0e8;"></div><div class="t" style="left:736.00px;top:247.53px;font-size:10px;line-height:10px;transform:scaleX(0.9500);transform-origin:0 0;color:#fff;">ADMIN</div><div class="r" style="left:895px;top:245px;width:1px;height:15px;background:#7ab0e8;"></div><div class="t" style="left:805.00px;top:247.53px;font-size:10px;line-height:10px;transform:scaleX(0.9500);transform-origin:0 0;color:#fff;">ADMIN</div><div class="r" style="left:945px;top:245px;width:1px;height:15px;background:#7ab0e8;"></div><div class="t" style="left:898.00px;top:247.53px;font-size:10px;line-height:10px;transform:scaleX(0.9500);transform-origin:0 0;color:#fff;">ADMIN</div><div class="r" style="left:988px;top:245px;width:1px;height:15px;background:#7ab0e8;"></div><div class="t" style="left:948.00px;top:247.53px;font-size:10px;line-height:10px;transform:scaleX(0.9500);transform-origin:0 0;color:#fff;">Standard</div><div class="r" style="left:1046px;top:245px;width:1px;height:15px;background:#7ab0e8;"></div><div class="t" style="left:1039.94px;top:247.53px;font-size:10px;line-height:10px;transform:scaleX(0.9100);transform-origin:0 0;color:#fff;">0</div><div class="r" style="left:1178px;top:245px;width:1px;height:15px;background:#7ab0e8;"></div><div class="r" style="left:1210px;top:245px;width:1px;height:15px;background:#7ab0e8;"></div><div class="t" style="left:1181.00px;top:247.53px;font-size:10px;line-height:10px;transform:scaleX(0.9500);transform-origin:0 0;color:#fff;">Open</div><div class="r" style="left:1260px;top:245px;width:1px;height:15px;background:#7ab0e8;"></div><div class="t" style="left:1213.00px;top:247.53px;font-size:10px;line-height:10px;transform:scaleX(0.9257);transform-origin:0 0;color:#fff;">N45</div><div class="r" style="left:1299px;top:245px;width:1px;height:15px;background:#7ab0e8;"></div><div class="t" style="left:1263.00px;top:247.53px;font-size:10px;line-height:10px;transform:scaleX(0.9500);transform-origin:0 0;color:#fff;">HQ</div><div class="r" style="left:168px;top:260px;width:1112px;height:15px;background:#ffffff;"></div><div class="r" style="left:222px;top:260px;width:1px;height:15px;background:#d0d0d0;"></div><div class="r" style="left:168px;top:260px;width:55px;height:15px;background:#fffde6;border-left:1px solid #777;box-sizing:border-box;"></div><div class="t" style="left:190.63px;top:262.54px;font-size:10px;line-height:10px;transform:scaleX(0.9100);transform-origin:0 0;color:#222;">100048</div><div class="r" style="left:274px;top:260px;width:1px;height:15px;background:#d0d0d0;"></div><div class="t" style="left:225.00px;top:262.54px;font-size:10px;line-height:10px;transform:scaleX(0.9100);transform-origin:0 0;color:#222;">8/24/2023</div><div class="r" style="left:332px;top:260px;width:1px;height:15px;background:#d0d0d0;"></div><div class="t" style="left:286.28px;top:262.54px;font-size:10px;line-height:10px;transform:scaleX(0.9247);transform-origin:0 0;color:#222;">Rs  413.00</div><div class="r" style="left:402px;top:260px;width:1px;height:15px;background:#d0d0d0;"></div><div class="t" style="left:335.00px;top:262.54px;font-size:10px;line-height:10px;transform:scaleX(0.9100);transform-origin:0 0;color:#222;">100075</div><div class="r" style="left:466px;top:260px;width:1px;height:15px;background:#d0d0d0;"></div><div class="t" style="left:405.00px;top:262.54px;font-size:10px;line-height:10px;transform:scaleX(0.9500);transform-origin:0 0;color:#222;">SREE V</div><div class="r" style="left:540px;top:260px;width:1px;height:15px;background:#d0d0d0;"></div><div class="t" style="left:469.00px;top:262.54px;font-size:10px;line-height:10px;transform:scaleX(0.9431);transform-origin:0 0;color:#222;">1. Online Web...</div><div class="r" style="left:669px;top:260px;width:1px;height:15px;background:#d0d0d0;"></div><div class="r" style="left:733px;top:260px;width:1px;height:15px;background:#d0d0d0;"></div><div class="t" style="left:672.00px;top:262.54px;font-size:10px;line-height:10px;transform:scaleX(0.9500);transform-origin:0 0;color:#222;">INR</div><div class="r" style="left:802px;top:260px;width:1px;height:15px;background:#d0d0d0;"></div><div class="t" style="left:736.00px;top:262.54px;font-size:10px;line-height:10px;transform:scaleX(0.9500);transform-origin:0 0;color:#222;">ADMIN</div><div class="r" style="left:895px;top:260px;width:1px;height:15px;background:#d0d0d0;"></div><div class="t" style="left:805.00px;top:262.54px;font-size:10px;line-height:10px;transform:scaleX(0.9500);transform-origin:0 0;color:#222;">ADMIN</div><div class="r" style="left:945px;top:260px;width:1px;height:15px;background:#d0d0d0;"></div><div class="t" style="left:898.00px;top:262.54px;font-size:10px;line-height:10px;transform:scaleX(0.9500);transform-origin:0 0;color:#222;">ADMIN</div><div class="r" style="left:988px;top:260px;width:1px;height:15px;background:#d0d0d0;"></div><div class="t" style="left:948.00px;top:262.54px;font-size:10px;line-height:10px;transform:scaleX(0.9500);transform-origin:0 0;color:#222;">Standard</div><div class="r" style="left:1046px;top:260px;width:1px;height:15px;background:#d0d0d0;"></div><div class="t" style="left:1039.94px;top:262.54px;font-size:10px;line-height:10px;transform:scaleX(0.9100);transform-origin:0 0;color:#222;">0</div><div class="r" style="left:1178px;top:260px;width:1px;height:15px;background:#d0d0d0;"></div><div class="r" style="left:1210px;top:260px;width:1px;height:15px;background:#d0d0d0;"></div><div class="t" style="left:1181.00px;top:262.54px;font-size:10px;line-height:10px;transform:scaleX(0.9500);transform-origin:0 0;color:#222;">Open</div><div class="r" style="left:1260px;top:260px;width:1px;height:15px;background:#d0d0d0;"></div><div class="t" style="left:1213.00px;top:262.54px;font-size:10px;line-height:10px;transform:scaleX(0.9257);transform-origin:0 0;color:#222;">N45</div><div class="r" style="left:1299px;top:260px;width:1px;height:15px;background:#d0d0d0;"></div><div class="t" style="left:1263.00px;top:262.54px;font-size:10px;line-height:10px;transform:scaleX(0.9500);transform-origin:0 0;color:#222;">HQ</div><div class="r" style="left:168px;top:274px;width:1112px;height:1px;background:#d0d0d0;"></div><div class="r" style="left:167px;top:259px;width:431px;height:18px;border:2px solid #e8303a;box-sizing:border-box;box-shadow:1px 1px 2px rgba(0,0,0,.3);"></div><div class="r" style="left:168px;top:313px;width:1112px;height:354px;background:#fdfafd;"></div><div class="t" style="left:192.50px;top:291.84px;font-size:18.5px;line-height:18.5px;font-weight:bold;transform:scaleX(0.9949);transform-origin:0 0;color:#111;text-shadow:2px 0 0 #fff,-2px 0 0 #fff,0 2px 0 #fff,0 -2px 0 #fff,1.5px 1.5px 0 #fff,-1.5px -1.5px 0 #fff,1.5px -1.5px 0 #fff,-1.5px 1.5px 0 #fff,2px 3px 3px rgba(0,0,0,.75),3px 4px 4px rgba(0,0,0,.35);-webkit-font-smoothing:antialiased;">OPEN THE SALES ORDER TO</div><div class="t" style="left:192.50px;top:313.34px;font-size:18.5px;line-height:18.5px;font-weight:bold;transform:scaleX(0.9952);transform-origin:0 0;color:#111;text-shadow:2px 0 0 #fff,-2px 0 0 #fff,0 2px 0 #fff,0 -2px 0 #fff,1.5px 1.5px 0 #fff,-1.5px -1.5px 0 #fff,1.5px -1.5px 0 #fff,-1.5px 1.5px 0 #fff,2px 3px 3px rgba(0,0,0,.75),3px 4px 4px rgba(0,0,0,.35);-webkit-font-smoothing:antialiased;">VIEW WEB ORDERS</div><div class="r" style="left:171px;top:338px;width:1px;height:28px;background:#c8c8c8;"></div><div class="r" style="left:174px;top:339px;width:128px;height:27px;background:#f4f2f4;border:1px solid #c8c8c8;border-left:1px solid #aaa;box-sizing:border-box;"></div><div class="t" style="left:182.00px;top:352.54px;font-size:10px;line-height:10px;transform:scaleX(0.9543);transform-origin:0 0;color:#222;"><u>O</u>nline Shipping Calculator</div><div class="r" style="left:174px;top:368px;width:1px;height:16px;background:#bbb;"></div><div class="t" style="left:181.00px;top:371.54px;font-size:10px;line-height:10px;transform:scaleX(0.9194);transform-origin:0 0;color:#222;"><u>M</u>enu</div><div class="t" style="left:213.00px;top:371.54px;font-size:10px;line-height:10px;transform:scaleX(0.9615);transform-origin:0 0;color:#222;"><u>V</u>iew Product(s) Sales History</div><div class="t" style="left:349.00px;top:371.54px;font-size:10px;line-height:10px;transform:scaleX(0.9575);transform-origin:0 0;color:#222;">Options</div><div class="t" style="left:391.00px;top:371.54px;font-size:10px;line-height:10px;transform:scaleX(0.9485);transform-origin:0 0;color:#222;">Custom Options</div><div class="r" style="left:168px;top:385px;width:1112px;height:1px;background:#d8d8d8;"></div><div class="r" style="left:170px;top:386px;width:700px;height:31px;border-right:1px solid #cfcfcf;box-sizing:border-box;"></div><div class="r" style="left:174px;top:389px;width:1px;height:25px;background:#bbb;"></div><div class="r" style="left:240px;top:389px;width:1px;height:25px;background:#c4c4c4;"></div><div class="r" style="left:244px;top:389px;width:1px;height:25px;background:#c4c4c4;"></div><div class="r" style="left:342px;top:389px;width:1px;height:25px;background:#c4c4c4;"></div><div class="r" style="left:346px;top:389px;width:1px;height:25px;background:#c4c4c4;"></div><div class="r" style="left:475px;top:389px;width:1px;height:25px;background:#c4c4c4;"></div><div class="r" style="left:479px;top:389px;width:1px;height:25px;background:#c4c4c4;"></div><div class="r" style="left:666px;top:389px;width:1px;height:25px;background:#c4c4c4;"></div><div class="r" style="left:670px;top:389px;width:1px;height:25px;background:#c4c4c4;"></div><div class="r" style="left:768px;top:389px;width:1px;height:25px;background:#c4c4c4;"></div><div class="r" style="left:772px;top:389px;width:1px;height:25px;background:#c4c4c4;"></div><svg class="r" style="left:178px;top:390px;" width="24" height="23" viewBox="0 0 24 24" preserveAspectRatio="none"><path d="M9 2h6v7h7v6h-7v7H9v-7H2V9h7z" fill="#3f7fd0" stroke="#2a5fae" stroke-width="0.8"/><path d="M10 3h3v7h7v2h-7v-2" fill="#8ab8f0" opacity=".6"/></svg><svg class="r" style="left:211px;top:390px;" width="24" height="23" viewBox="0 0 24 24" preserveAspectRatio="none"><rect x="2" y="2" width="20" height="20" rx="1" fill="#a8a8a8" stroke="#8a8a8a"/><rect x="6" y="3" width="12" height="8" fill="#dcdcdc"/><rect x="6" y="14" width="12" height="8" fill="#8c8c8c"/><rect x="8" y="16" width="5" height="5" fill="#c8c8c8"/></svg><svg class="r" style="left:250px;top:390px;" width="22" height="23" viewBox="0 0 24 24" preserveAspectRatio="none"><path d="M5 4l6-3 6 3v6l-6 3-6-3z" fill="#5aa0e8" stroke="#2a6ab0" stroke-width=".6"/><path d="M1 13l6-3 6 3v7l-6 3-6-3z" fill="#d83030" stroke="#901010" stroke-width=".6"/><path d="M11 12l6-3 6 3v6l-6 3-6-3z" fill="#e8a020"/><path d="M10 17l3 4 9-9" stroke="#f0a800" stroke-width="3" fill="none"/></svg><svg class="r" style="left:282px;top:390px;" width="21" height="23" viewBox="0 0 24 24" preserveAspectRatio="none"><path d="M6 4l6-3 6 3v6l-6 3-6-3z" fill="#3ab0e0" stroke="#1a7ab0" stroke-width=".6"/><path d="M1 13l6-3 6 3v7l-6 3-6-3z" fill="#e04020" stroke="#901010" stroke-width=".6"/><rect x="13" y="11" width="9" height="12" fill="#fff" stroke="#888" stroke-width=".6"/><path d="M15 20l5-6" stroke="#e0a020" stroke-width="1.5"/></svg><svg class="r" style="left:313px;top:390px;" width="23" height="23" viewBox="0 0 24 24" preserveAspectRatio="none"><circle cx="11" cy="11" r="10" fill="#2a7ad0"/><path d="M4 6c3 1 5 4 4 7s3 5 4 8M12 2c2 3 6 4 8 4" stroke="#4ab84a" stroke-width="3" fill="none"/><path d="M12 14l5-3 5 3v6l-5 3-5-3z" fill="#d83030"/><path d="M13 6l4-2 4 2v4l-4 2-4-2z" fill="#6ac0f0"/></svg><svg class="r" style="left:352px;top:390px;" width="24" height="23" viewBox="0 0 24 24" preserveAspectRatio="none"><circle cx="6" cy="9" r="3.5" fill="#e8b080"/><path d="M1 21c0-6 2-8 5-8s5 2 5 8z" fill="#6a6a6a"/><circle cx="12" cy="7" r="3.5" fill="#f0c090"/><path d="M7 19c0-6 2-8 5-8s5 2 5 8z" fill="#c84a4a"/><circle cx="18" cy="9" r="3.5" fill="#e8b080"/><path d="M13 21c0-6 2-8 5-8s5 2 5 8z" fill="#7a5a3a"/><path d="M9 17l3 3 7-7" stroke="#3ab03a" stroke-width="3" fill="none"/></svg><svg class="r" style="left:383px;top:390px;" width="24" height="23" viewBox="0 0 24 24" preserveAspectRatio="none"><circle cx="9" cy="8" r="4" fill="#e0b890"/><path d="M9 4a4 4 0 0 1 4 3h-8a4 4 0 0 1 4-3z" fill="#333"/><path d="M1 23c0-8 3-11 8-11s7 3 7 11z" fill="#2a2a2a"/><path d="M8 13l1 6 1-6z" fill="#fff"/><rect x="14" y="2" width="9" height="12" fill="#fff" stroke="#4a8ad8" stroke-width="1" transform="rotate(10 18 8)"/><path d="M12 20l10-14 1.5 1-10 14z" fill="#2a2a2a"/><path d="M20 8l2-3 1.5 1-2 3z" fill="#e0c020"/></svg><svg class="r" style="left:415px;top:390px;" width="23" height="23" viewBox="0 0 24 24" preserveAspectRatio="none"><rect x="1" y="5" width="22" height="14" rx="1.5" fill="#fff" stroke="#3a7ad0" stroke-width="1.5"/><rect x="1" y="8" width="22" height="3" fill="#3a7ad0"/><rect x="4" y="14" width="7" height="1.5" fill="#3a7ad0"/></svg><svg class="r" style="left:449px;top:390px;" width="19" height="23" viewBox="0 0 24 24" preserveAspectRatio="none"><path d="M4 1h12l5 5v17H4z" fill="#fff" stroke="#3a8ad0" stroke-width="1.2"/><rect x="7" y="5" width="5" height="3" fill="#3a8ad0"/><rect x="7" y="9" width="8" height="2" fill="#3a8ad0"/><text x="6" y="20" font-family="Liberation Sans" font-weight="bold" font-size="7.5" fill="#2ca02c">AR</text></svg><svg class="r" style="left:486px;top:390px;" width="22" height="23" viewBox="0 0 24 24" preserveAspectRatio="none"><rect x="1" y="10" width="16" height="11" fill="#8ac080" stroke="#3a7a3a" stroke-width=".8"/><circle cx="9" cy="15" r="3" fill="#cfe8c8"/><path d="M7 1l5 5h-3v6H5V6H2z" fill="#e03a4a"/><ellipse cx="16" cy="14" rx="6" ry="2.5" fill="#f4c020" stroke="#a07010" stroke-width=".5"/><ellipse cx="16" cy="17" rx="6" ry="2.5" fill="#f4c020" stroke="#a07010" stroke-width=".5"/><ellipse cx="16" cy="20" rx="6" ry="2.5" fill="#f4b010" stroke="#a07010" stroke-width=".5"/></svg><svg class="r" style="left:516px;top:390px;" width="24" height="23" viewBox="0 0 24 24" preserveAspectRatio="none"><ellipse cx="12" cy="4" rx="11.5" ry="3.2" fill="#20a8a0"/><path d="M.5 4.5Q12 10 23.5 4.5L21 9Q12 13 3 9z" fill="#2cc0b0"/><path d="M3 9Q12 13 21 9l-1.8 3.5Q12 15.5 4.8 12.5z" fill="#68c030"/><path d="M4.8 12.5Q12 15.5 19.2 12.5l-1.6 3Q12 18 6.4 15.5z" fill="#2a8ad8"/><path d="M6.4 15.5Q12 18 17.6 15.5L16 19Q12 20.5 8 19z" fill="#8ab8e8"/><path d="M8 19Q12 20.5 16 19l-1.5 4h-5z" fill="#f0a020"/></svg><svg class="r" style="left:547px;top:390px;" width="22" height="23" viewBox="0 0 24 24" preserveAspectRatio="none"><path d="M8 3h8v2l-3 6 3 6v2H8v-2l3-6-3-6z" fill="#fff" stroke="#333" stroke-width="1.2"/><path d="M10 17h4l-2-3z" fill="#888"/><path d="M14 5h5V1l5 5-5 5V7h-5z" fill="#3ab83a" stroke="#1a6a1a" stroke-width=".5"/><path d="M10 19H5v-3l-5 5 5 5v-4h5z" fill="#1a4ac0" stroke="#0a2a80" stroke-width=".5"/></svg><svg class="r" style="left:580px;top:390px;" width="21" height="23" viewBox="0 0 24 24" preserveAspectRatio="none"><circle cx="11" cy="13" r="10" fill="#2a7ad0"/><path d="M11 13V3a10 10 0 0 1 10 10z" fill="#f0b030"/><path d="M11 13h10a10 10 0 0 1-3 7z" fill="#7ac040"/><path d="M4 8a8 8 0 0 1 5-4" stroke="#bfe0ff" stroke-width="2" fill="none"/><text x="14" y="8" font-family="Liberation Sans" font-weight="bold" font-size="8" fill="#d02a2a">%</text></svg><svg class="r" style="left:609px;top:390px;" width="22" height="23" viewBox="0 0 24 24" preserveAspectRatio="none"><rect x="1" y="4" width="14" height="13" rx="1" fill="#3a86d8"/><path d="M15 8h4l4 5v4h-8z" fill="#3a86d8"/><rect x="17" y="9" width="3" height="3" fill="#fff"/><circle cx="6" cy="19" r="3" fill="#fff" stroke="#3a86d8" stroke-width="1.8"/><circle cx="18" cy="19" r="3" fill="#fff" stroke="#3a86d8" stroke-width="1.8"/></svg><svg class="r" style="left:639px;top:390px;" width="23" height="23" viewBox="0 0 24 24" preserveAspectRatio="none"><path d="M5 2l5 1 4-2 4 3 2 4-1 4 3 5-3 4-5-1-3 3-4-3-4 1-1-5 2-4-2-4z" fill="#9c9c9c"/><path d="M9 10l3 2 2 4" stroke="#c8c8c8" stroke-width="1" fill="none"/></svg><svg class="r" style="left:680px;top:390px;" width="22" height="23" viewBox="0 0 24 24" preserveAspectRatio="none"><rect x="1" y="9" width="22" height="11" rx="2" fill="#cfcfcf" stroke="#7a7a7a" stroke-width=".8"/><rect x="4" y="2" width="16" height="9" fill="#f4f4f4" stroke="#888" stroke-width=".6"/><circle cx="10" cy="9" r="4.5" fill="#b4d8f4" stroke="#555" stroke-width="1.3"/><path d="M13 12l4 4" stroke="#555" stroke-width="2"/></svg><svg class="r" style="left:709px;top:390px;" width="22" height="23" viewBox="0 0 24 24" preserveAspectRatio="none"><rect x="6" y="1" width="12" height="9" fill="#fff" stroke="#888" stroke-width=".8"/><rect x="1" y="8" width="22" height="11" rx="3" fill="#d8d8d8" stroke="#888" stroke-width=".8"/><rect x="5" y="9" width="14" height="3" fill="#3a9ad8"/><rect x="6" y="15" width="12" height="8" fill="#fff" stroke="#888" stroke-width=".8"/></svg><svg class="r" style="left:739px;top:390px;" width="25" height="23" viewBox="0 0 24 24" preserveAspectRatio="none"><rect x="1" y="4" width="16" height="13" fill="#fff" stroke="#2a6ac0" stroke-width="1.2"/><rect x="4" y="7" width="16" height="13" fill="#fff" stroke="#2a6ac0" stroke-width="1.2"/><rect x="7" y="10" width="16" height="13" fill="#fff6d8" stroke="#2a6ac0" stroke-width="1.2"/><path d="M9 16h8M9 19h6" stroke="#2a6ac0" stroke-width="1.2"/><rect x="19" y="12" width="2.5" height="2.5" fill="#d02020"/><path d="M12 3h6V0l5 4-5 4V5h-6z" fill="#2cb040" stroke="#111" stroke-width=".6"/></svg><svg class="r" style="left:780px;top:390px;" width="23" height="23" viewBox="0 0 24 24" preserveAspectRatio="none"><defs><radialGradient id="gi" cx=".35" cy=".3" r=".8"><stop offset="0" stop-color="#9ad0ff"/><stop offset=".6" stop-color="#2a86e0"/><stop offset="1" stop-color="#0a4aa0"/></radialGradient></defs><circle cx="12" cy="12" r="11" fill="url(#gi)" stroke="#0a4a9a" stroke-width=".6"/><circle cx="13" cy="6" r="2" fill="#fff"/><path d="M9 10h5l-2 9h2l-.5 1.5H8l2-9H9z" fill="#fff"/></svg><svg class="r" style="left:810px;top:390px;" width="24" height="23" viewBox="0 0 24 24" preserveAspectRatio="none"><path d="M1 10l8-8h6l8 8v13h-6V13h-4v10H3V10z" fill="#a0a0a0"/><path d="M15 2l8 8v13" fill="#8a8a8a"/><rect x="16" y="4" width="3" height="8" fill="#c8c8c8"/></svg><svg class="r" style="left:842px;top:390px;" width="23" height="23" viewBox="0 0 24 24" preserveAspectRatio="none"><defs><linearGradient id="gc" x1="0" y1="0" x2="0" y2="1"><stop offset="0" stop-color="#e24a3a"/><stop offset="1" stop-color="#8a0a0a"/></linearGradient></defs><rect x="1" y="1" width="22" height="22" rx="4" fill="url(#gc)" stroke="#6a0000" stroke-width=".6"/><path d="M7 7l10 10M17 7L7 17" stroke="#fff" stroke-width="3.2"/></svg><div class="r" style="left:604px;top:386px;width:31px;height:29px;border-right:1px solid #e0e0e0;border-bottom:1px solid #e8e8e8;box-sizing:border-box;"></div><div class="r" style="left:168px;top:415px;width:1112px;height:2px;background:#878787;"></div><div class="r" style="left:168px;top:417px;width:1112px;height:3px;background:#fbfbfb;"></div><div class="r" style="left:168px;top:420px;width:1112px;height:1.5px;background:#d4d4d4;"></div><div class="r" style="left:168px;top:421.5px;width:1112px;height:62.5px;background:#a5c3ec;border-left:1.5px solid #8a8a8a;box-sizing:border-box;"></div><div class="r" style="left:168px;top:484px;width:1112px;height:1px;background:#8a9ab8;"></div><div class="r" style="left:195px;top:426px;width:16px;height:16px;background:#e8e8e8;border:1px solid #999;border-top-color:#fff;border-left-color:#fff;box-sizing:border-box;"></div><div class="r" style="left:198px;top:429px;width:10px;height:10px;border-radius:50%;background:radial-gradient(circle at 45% 40%,#e8f6ff,#7ac0ea);border:1.2px solid #9aa4ac;box-sizing:border-box;"></div><div class="t" style="left:215.00px;top:426.73px;font-size:14.5px;line-height:14.5px;font-weight:bold;transform:scaleX(0.9648);transform-origin:0 0;color:#111;">1. Online Web Orders</div><div class="t" style="left:177.50px;top:447.54px;font-size:10px;line-height:10px;transform:scaleX(0.8997);transform-origin:0 0;color:#222;">Number</div><div class="t" style="left:177.50px;top:467.54px;font-size:10px;line-height:10px;transform:scaleX(0.8995);transform-origin:0 0;color:#222;">Date</div><div class="r" style="left:215px;top:444px;width:108px;height:17px;background:#fff;border:1px solid #9a9a9a;border-right-color:#e4e4e4;border-bottom-color:#e4e4e4;box-sizing:border-box;"></div><div class="t" style="left:218.00px;top:446.54px;font-size:10px;line-height:10px;transform:scaleX(0.8990);transform-origin:0 0;color:#111;">100048</div><div class="r" style="left:312px;top:446px;width:9px;height:13px;background:#f0f0f0;border:1px solid #aaa;box-sizing:border-box;"></div><svg class="r" style="left:314px;top:451px;" width="6" height="4" viewBox="0 0 6 4"><path d="M0 0h6l-3 4z" fill="#111"/></svg><div class="r" style="left:215px;top:465px;width:109px;height:17px;background:#a8c6ee;border:1px solid #d8e6f8;box-sizing:border-box;"></div><div class="t" style="left:232.00px;top:467.54px;font-size:10px;line-height:10px;transform:scaleX(0.9610);transform-origin:0 0;color:#222;">August 24, 2023</div><div class="t" style="left:352.00px;top:468.11px;font-size:10.5px;line-height:10.5px;font-weight:bold;transform:scaleX(0.9084);transform-origin:0 0;color:#111;">Open Order</div><div class="t" style="left:444.00px;top:428.54px;font-size:10px;line-height:10px;transform:scaleX(1.0151);transform-origin:0 0;color:#222;">C<u>u</u>stomer</div><div class="r" style="left:493px;top:425px;width:119px;height:17px;background:#fff;border:1px solid #9a9a9a;border-right-color:#e4e4e4;border-bottom-color:#e4e4e4;box-sizing:border-box;"></div><div class="t" style="left:496.00px;top:427.54px;font-size:10px;line-height:10px;transform:scaleX(0.9589);transform-origin:0 0;color:#111;">100075</div><div class="r" style="left:601px;top:427px;width:9px;height:13px;background:#f0f0f0;border:1px solid #aaa;box-sizing:border-box;"></div><svg class="r" style="left:603px;top:432px;" width="6" height="4" viewBox="0 0 6 4"><path d="M0 0h6l-3 4z" fill="#111"/></svg><div class="r" style="left:444px;top:444px;width:194px;height:38px;background:#fff;border:1px solid #9a9a9a;border-right-color:#e4e4e4;border-bottom-color:#e4e4e4;box-sizing:border-box;"></div><div class="t" style="left:445.50px;top:447.54px;font-size:10px;line-height:10px;transform:scaleX(0.9678);transform-origin:0 0;color:#111;">SREE V</div><div class="t" style="left:445.50px;top:459.14px;font-size:10px;line-height:10px;transform:scaleX(0.8990);transform-origin:0 0;color:#111;">#87</div><div class="t" style="left:445.50px;top:470.74px;font-size:10px;line-height:10px;transform:scaleX(0.9897);transform-origin:0 0;color:#111;">blr</div><div class="r" style="left:625px;top:445px;width:12px;height:13px;background:#fafafa;border:1px solid #cfcfcf;box-sizing:border-box;"></div><div class="r" style="left:625px;top:458px;width:12px;height:11px;background:#fafafa;border:1px solid #dcdcdc;border-top:none;border-bottom:none;box-sizing:border-box;"></div><div class="r" style="left:625px;top:469px;width:12px;height:12px;background:#fafafa;border:1px solid #cfcfcf;box-sizing:border-box;"></div><svg class="r" style="left:628px;top:449px;" width="6" height="4" viewBox="0 0 6 4"><path d="M.5 3.5l2.5-2.5 2.5 2.5" stroke="#555" fill="none" stroke-width="1.1"/></svg><svg class="r" style="left:628px;top:473px;" width="6" height="4" viewBox="0 0 6 4"><path d="M.5 .5l2.5 2.5 2.5-2.5" stroke="#555" fill="none" stroke-width="1.1"/></svg><div class="t" style="left:660.00px;top:428.54px;font-size:10px;line-height:10px;transform:scaleX(1.0214);transform-origin:0 0;color:#222;">Ship To / Site</div><div class="r" style="left:647px;top:428px;width:8px;height:8px;background:#fff;border:1px solid #777;box-sizing:border-box;"></div><div class="r" style="left:725px;top:425px;width:93px;height:17px;background:#fff;border:1px solid #9a9a9a;border-right-color:#e4e4e4;border-bottom-color:#e4e4e4;box-sizing:border-box;"></div><div class="t" style="left:728.00px;top:427.54px;font-size:10px;line-height:10px;transform:scaleX(0.7791);transform-origin:0 0;color:#111;">205</div><div class="r" style="left:807px;top:427px;width:9px;height:13px;background:#f0f0f0;border:1px solid #aaa;box-sizing:border-box;"></div><svg class="r" style="left:809px;top:432px;" width="6" height="4" viewBox="0 0 6 4"><path d="M0 0h6l-3 4z" fill="#111"/></svg><div class="r" style="left:820px;top:425px;width:16px;height:17px;background:#e8eef8;border:1px solid #999;box-sizing:border-box;"></div><svg class="r" style="left:821px;top:426px;" width="14" height="15" viewBox="0 0 24 24" preserveAspectRatio="none"><rect x="4" y="3" width="12" height="16" fill="#c8e0f4" stroke="#4a8ac8" stroke-width="1"/><path d="M12 13l6 6M18 13l-6 6" stroke="#e02020" stroke-width="2"/></svg><div class="r" style="left:645px;top:444px;width:197px;height:38px;background:#fff;border:1px solid #9a9a9a;border-right-color:#e4e4e4;border-bottom-color:#e4e4e4;box-sizing:border-box;"></div><div class="t" style="left:646.50px;top:447.54px;font-size:10px;line-height:10px;transform:scaleX(0.9678);transform-origin:0 0;color:#111;">SREE V</div><div class="t" style="left:646.50px;top:459.14px;font-size:10px;line-height:10px;transform:scaleX(0.8990);transform-origin:0 0;color:#111;">#87</div><div class="t" style="left:646.50px;top:470.74px;font-size:10px;line-height:10px;transform:scaleX(0.9897);transform-origin:0 0;color:#111;">blr</div><div class="r" style="left:829px;top:445px;width:12px;height:13px;background:#fafafa;border:1px solid #cfcfcf;box-sizing:border-box;"></div><div class="r" style="left:829px;top:458px;width:12px;height:11px;background:#fafafa;border:1px solid #dcdcdc;border-top:none;border-bottom:none;box-sizing:border-box;"></div><div class="r" style="left:829px;top:469px;width:12px;height:12px;background:#fafafa;border:1px solid #cfcfcf;box-sizing:border-box;"></div><svg class="r" style="left:832px;top:449px;" width="6" height="4" viewBox="0 0 6 4"><path d="M.5 3.5l2.5-2.5 2.5 2.5" stroke="#555" fill="none" stroke-width="1.1"/></svg><svg class="r" style="left:832px;top:473px;" width="6" height="4" viewBox="0 0 6 4"><path d="M.5 .5l2.5 2.5 2.5-2.5" stroke="#555" fill="none" stroke-width="1.1"/></svg><div class="r" style="left:617px;top:418px;width:140px;height:16px;background:#fdfde0;border:1px solid #6a6a6a;box-sizing:border-box;box-shadow:1px 1px 2px rgba(0,0,0,.3);"></div><div class="t" style="left:620.00px;top:421.54px;font-size:10px;line-height:10px;transform:scaleX(0.9454);transform-origin:0 0;color:#222;">Shipping Calculator (Ctrl+Alt+S)</div><div class="r" style="left:170.5px;top:486px;width:45.5px;height:17px;background:#f9f8f9;border-left:1.5px solid #8a8a8a;border-top:1.5px solid #9a9a9a;border-right:1px solid #e0e0e0;box-sizing:border-box;"></div><div class="t" style="left:175.50px;top:490.04px;font-size:10px;line-height:10px;transform:scaleX(0.9426);transform-origin:0 0;color:#222;"><u>P</u>roducts</div><div class="r" style="left:220px;top:486px;width:36.5px;height:17.5px;background:#f4f2f4;border-top:1px solid #fff;border-left:1px solid #fff;border-right:2px solid #7a7a7a;border-bottom:2px solid #7a7a7a;box-sizing:border-box;box-shadow:1px 1px 1px rgba(0,0,0,.15);"></div><div class="t" style="left:224.00px;top:490.04px;font-size:10px;line-height:10px;transform:scaleX(0.9160);transform-origin:0 0;color:#222;"><u>D</u>etails</div><div class="r" style="left:259.6px;top:486px;width:43.39999999999998px;height:17.5px;background:#f4f2f4;border-top:1px solid #fff;border-left:1px solid #fff;border-right:2px solid #7a7a7a;border-bottom:2px solid #7a7a7a;box-sizing:border-box;box-shadow:1px 1px 1px rgba(0,0,0,.15);"></div><div class="t" style="left:263.40px;top:490.04px;font-size:10px;line-height:10px;transform:scaleX(0.9568);transform-origin:0 0;color:#222;">Address</div><div class="r" style="left:306px;top:486px;width:71px;height:17.5px;background:#f4f2f4;border-top:1px solid #fff;border-left:1px solid #fff;border-right:2px solid #7a7a7a;border-bottom:2px solid #7a7a7a;box-sizing:border-box;box-shadow:1px 1px 1px rgba(0,0,0,.15);"></div><div class="t" style="left:309.80px;top:490.04px;font-size:10px;line-height:10px;transform:scaleX(0.9462);transform-origin:0 0;color:#222;">Extended Data</div><div class="r" style="left:379.5px;top:486px;width:38.0px;height:17.5px;background:#f4f2f4;border-top:1px solid #fff;border-left:1px solid #fff;border-right:2px solid #7a7a7a;border-bottom:2px solid #7a7a7a;box-sizing:border-box;box-shadow:1px 1px 1px rgba(0,0,0,.15);"></div><div class="t" style="left:383.70px;top:490.04px;font-size:10px;line-height:10px;transform:scaleX(0.9481);transform-origin:0 0;color:#222;">History</div><div class="r" style="left:420.7px;top:486px;width:62.30000000000001px;height:17.5px;background:#f4f2f4;border-top:1px solid #fff;border-left:1px solid #fff;border-right:2px solid #7a7a7a;border-bottom:2px solid #7a7a7a;box-sizing:border-box;box-shadow:1px 1px 1px rgba(0,0,0,.15);"></div><div class="t" style="left:424.50px;top:490.04px;font-size:10px;line-height:10px;transform:scaleX(0.9625);transform-origin:0 0;color:#222;">Attachments</div><div class="r" style="left:485.6px;top:486px;width:34.39999999999998px;height:17.5px;background:#f4f2f4;border-top:1px solid #fff;border-left:1px solid #fff;border-right:2px solid #7a7a7a;border-bottom:2px solid #7a7a7a;box-sizing:border-box;box-shadow:1px 1px 1px rgba(0,0,0,.15);"></div><div class="t" style="left:489.60px;top:490.04px;font-size:10px;line-height:10px;transform:scaleX(0.9937);transform-origin:0 0;color:#222;">Tasks</div><div class="r" style="left:523px;top:486px;width:41px;height:17.5px;background:#f4f2f4;border-top:1px solid #fff;border-left:1px solid #fff;border-right:2px solid #7a7a7a;border-bottom:2px solid #7a7a7a;box-sizing:border-box;box-shadow:1px 1px 1px rgba(0,0,0,.15);"></div><div class="t" style="left:527.00px;top:490.04px;font-size:10px;line-height:10px;transform:scaleX(0.9278);transform-origin:0 0;color:#222;">Tagging</div><div class="r" style="left:566.5px;top:486px;width:87.5px;height:17.5px;background:#f4f2f4;border-top:1px solid #fff;border-left:1px solid #fff;border-right:2px solid #7a7a7a;border-bottom:2px solid #7a7a7a;box-sizing:border-box;box-shadow:1px 1px 1px rgba(0,0,0,.15);"></div><div class="t" style="left:570.70px;top:490.04px;font-size:10px;line-height:10px;transform:scaleX(0.9515);transform-origin:0 0;color:#222;">Shipment Tracking</div><div class="r" style="left:172px;top:508px;width:1108px;height:1px;background:#888;"></div><div class="r" style="left:172px;top:509px;width:1px;height:81px;background:#888;"></div><div class="r" style="left:173px;top:509px;width:1107px;height:16px;background:#a6c4ee;"></div><div class="r" style="left:190px;top:509px;width:2px;height:16px;border-left:1px solid #eef3fb;border-right:1px solid #8aa6cc;box-sizing:border-box;"></div><div class="t" style="left:175.00px;top:513.53px;font-size:10px;line-height:10px;transform:scaleX(0.9100);transform-origin:0 0;color:#222;">#</div><div class="r" style="left:219px;top:509px;width:2px;height:16px;border-left:1px solid #eef3fb;border-right:1px solid #8aa6cc;box-sizing:border-box;"></div><div class="t" style="left:194.24px;top:513.53px;font-size:10px;line-height:10px;transform:scaleX(0.9500);transform-origin:0 0;color:#222;">Stock</div><div class="r" style="left:302px;top:509px;width:2px;height:16px;border-left:1px solid #eef3fb;border-right:1px solid #8aa6cc;box-sizing:border-box;"></div><div class="t" style="left:222.00px;top:513.53px;font-size:10px;line-height:10px;transform:scaleX(0.9500);transform-origin:0 0;color:#222;">Product Code</div><div class="r" style="left:512px;top:509px;width:2px;height:16px;border-left:1px solid #eef3fb;border-right:1px solid #8aa6cc;box-sizing:border-box;"></div><div class="t" style="left:305.00px;top:513.53px;font-size:10px;line-height:10px;transform:scaleX(0.9500);transform-origin:0 0;color:#222;">Product Description</div><div class="r" style="left:588px;top:509px;width:2px;height:16px;border-left:1px solid #eef3fb;border-right:1px solid #8aa6cc;box-sizing:border-box;"></div><div class="t" style="left:515.00px;top:513.53px;font-size:10px;line-height:10px;transform:scaleX(0.9742);transform-origin:0 0;color:#222;">Type</div><div class="r" style="left:628px;top:509px;width:2px;height:16px;border-left:1px solid #eef3fb;border-right:1px solid #8aa6cc;box-sizing:border-box;"></div><div class="t" style="left:592.15px;top:513.53px;font-size:10px;line-height:10px;transform:scaleX(0.9500);transform-origin:0 0;color:#222;">Ordered</div><div class="r" style="left:669px;top:509px;width:2px;height:16px;border-left:1px solid #eef3fb;border-right:1px solid #8aa6cc;box-sizing:border-box;"></div><div class="t" style="left:633.13px;top:513.53px;font-size:10px;line-height:10px;transform:scaleX(0.9500);transform-origin:0 0;color:#222;">Shipped</div><div class="r" style="left:738px;top:509px;width:2px;height:16px;border-left:1px solid #eef3fb;border-right:1px solid #8aa6cc;box-sizing:border-box;"></div><div class="t" style="left:715.35px;top:513.53px;font-size:10px;line-height:10px;transform:scaleX(0.9500);transform-origin:0 0;color:#222;">Price</div><div class="r" style="left:805px;top:509px;width:2px;height:16px;border-left:1px solid #eef3fb;border-right:1px solid #8aa6cc;box-sizing:border-box;"></div><div class="t" style="left:741.00px;top:513.53px;font-size:10px;line-height:10px;transform:scaleX(0.9500);transform-origin:0 0;color:#222;">UOM</div><div class="r" style="left:848px;top:509px;width:2px;height:16px;border-left:1px solid #eef3fb;border-right:1px solid #8aa6cc;box-sizing:border-box;"></div><div class="t" style="left:808.46px;top:513.53px;font-size:10px;line-height:10px;transform:scaleX(0.9500);transform-origin:0 0;color:#222;">Confirme</div><div class="r" style="left:936px;top:509px;width:2px;height:16px;border-left:1px solid #eef3fb;border-right:1px solid #8aa6cc;box-sizing:border-box;"></div><div class="t" style="left:857.38px;top:513.53px;font-size:10px;line-height:10px;transform:scaleX(0.9500);transform-origin:0 0;color:#222;">User Defined Cost</div><div class="r" style="left:1016px;top:509px;width:2px;height:16px;border-left:1px solid #eef3fb;border-right:1px solid #8aa6cc;box-sizing:border-box;"></div><div class="t" style="left:939.00px;top:513.53px;font-size:10px;line-height:10px;transform:scaleX(0.9500);transform-origin:0 0;color:#222;">Supplier</div><div class="r" style="left:1089px;top:509px;width:2px;height:16px;border-left:1px solid #eef3fb;border-right:1px solid #8aa6cc;box-sizing:border-box;"></div><div class="t" style="left:1051.04px;top:513.53px;font-size:10px;line-height:10px;transform:scaleX(0.9500);transform-origin:0 0;color:#222;">Discount</div><div class="r" style="left:1141px;top:509px;width:2px;height:16px;border-left:1px solid #eef3fb;border-right:1px solid #8aa6cc;box-sizing:border-box;"></div><div class="t" style="left:1092.31px;top:513.53px;font-size:10px;line-height:10px;transform:scaleX(0.9430);transform-origin:0 0;color:#222;">Discount %</div><div class="r" style="left:1181px;top:509px;width:2px;height:16px;border-left:1px solid #eef3fb;border-right:1px solid #8aa6cc;box-sizing:border-box;"></div><div class="t" style="left:1153.08px;top:513.53px;font-size:10px;line-height:10px;transform:scaleX(0.9500);transform-origin:0 0;color:#222;">Net Pr</div><div class="r" style="left:1281px;top:509px;width:2px;height:16px;border-left:1px solid #eef3fb;border-right:1px solid #8aa6cc;box-sizing:border-box;"></div><div class="t" style="left:1247.26px;top:513.53px;font-size:10px;line-height:10px;transform:scaleX(0.9500);transform-origin:0 0;color:#222;">Amount</div><div class="r" style="left:173px;top:525px;width:18px;height:15px;background:#fdfbe4;border-right:1px solid #cfcfcf;border-bottom:1px solid #cfcfcf;box-sizing:border-box;"></div><div class="t" style="left:183.94px;top:528.53px;font-size:10px;line-height:10px;transform:scaleX(0.9100);transform-origin:0 0;color:#222;">1</div><div class="r" style="left:191px;top:525px;width:29px;height:15px;background:#88ee88;border-right:1px solid #cfcfcf;border-bottom:1px solid #cfcfcf;box-sizing:border-box;"></div><div class="t" style="left:207.88px;top:528.53px;font-size:10px;line-height:10px;transform:scaleX(0.9100);transform-origin:0 0;color:#222;">84</div><div class="r" style="left:220px;top:525px;width:83px;height:15px;background:#3399ff;border-right:1px solid #cfcfcf;border-bottom:1px solid #cfcfcf;box-sizing:border-box;"></div><div class="t" style="left:222.00px;top:528.53px;font-size:10px;line-height:10px;transform:scaleX(0.9100);transform-origin:0 0;color:#fff;">22</div><div class="r" style="left:303px;top:525px;width:210px;height:15px;background:#fdfbe4;border-right:1px solid #cfcfcf;border-bottom:1px solid #cfcfcf;box-sizing:border-box;"></div><div class="t" style="left:305.00px;top:528.53px;font-size:10px;line-height:10px;transform:scaleX(0.9500);transform-origin:0 0;color:#222;">Amul Masti Spiced Butter Milk</div><div class="r" style="left:513px;top:525px;width:76px;height:15px;background:#fdfbe4;border-right:1px solid #cfcfcf;border-bottom:1px solid #cfcfcf;box-sizing:border-box;"></div><div class="t" style="left:515.00px;top:528.53px;font-size:10px;line-height:10px;transform:scaleX(0.9500);transform-origin:0 0;color:#222;">Stock</div><div class="r" style="left:589px;top:525px;width:40px;height:15px;background:#fdfbe4;border-right:1px solid #cfcfcf;border-bottom:1px solid #cfcfcf;box-sizing:border-box;"></div><div class="t" style="left:621.94px;top:528.53px;font-size:10px;line-height:10px;transform:scaleX(0.9100);transform-origin:0 0;color:#222;">2</div><div class="r" style="left:629px;top:525px;width:41px;height:15px;background:#fdfbe4;border-right:1px solid #cfcfcf;border-bottom:1px solid #cfcfcf;box-sizing:border-box;"></div><div class="t" style="left:662.94px;top:528.53px;font-size:10px;line-height:10px;transform:scaleX(0.9100);transform-origin:0 0;color:#222;">0</div><div class="r" style="left:670px;top:525px;width:69px;height:15px;background:#fdfbe4;border-right:1px solid #cfcfcf;border-bottom:1px solid #cfcfcf;box-sizing:border-box;"></div><div class="t" style="left:692.28px;top:528.53px;font-size:10px;line-height:10px;transform:scaleX(0.9247);transform-origin:0 0;color:#222;">Rs  100.00</div><div class="r" style="left:739px;top:525px;width:67px;height:15px;background:#fdfbe4;border-right:1px solid #cfcfcf;border-bottom:1px solid #cfcfcf;box-sizing:border-box;"></div><div class="t" style="left:741.00px;top:528.53px;font-size:10px;line-height:10px;transform:scaleX(0.9500);transform-origin:0 0;color:#222;">EA</div><div class="r" style="left:806px;top:525px;width:43px;height:15px;background:#fdfbe4;border-right:1px solid #cfcfcf;border-bottom:1px solid #cfcfcf;box-sizing:border-box;"></div><div class="t" style="left:841.94px;top:528.53px;font-size:10px;line-height:10px;transform:scaleX(0.9100);transform-origin:0 0;color:#222;">0</div><div class="r" style="left:849px;top:525px;width:88px;height:15px;background:#fdfbe4;border-right:1px solid #cfcfcf;border-bottom:1px solid #cfcfcf;box-sizing:border-box;"></div><div class="t" style="left:900.40px;top:528.53px;font-size:10px;line-height:10px;transform:scaleX(0.9291);transform-origin:0 0;color:#222;">Rs  0.00</div><div class="r" style="left:937px;top:525px;width:80px;height:15px;background:#fdfbe4;border-right:1px solid #cfcfcf;border-bottom:1px solid #cfcfcf;box-sizing:border-box;"></div><div class="r" style="left:1017px;top:525px;width:73px;height:15px;background:#fdfbe4;border-right:1px solid #cfcfcf;border-bottom:1px solid #cfcfcf;box-sizing:border-box;"></div><div class="t" style="left:1053.40px;top:528.53px;font-size:10px;line-height:10px;transform:scaleX(0.9291);transform-origin:0 0;color:#222;">Rs  0.00</div><div class="r" style="left:1090px;top:525px;width:52px;height:15px;background:#fdfbe4;border-right:1px solid #cfcfcf;border-bottom:1px solid #cfcfcf;box-sizing:border-box;"></div><div class="t" style="left:1122.29px;top:528.53px;font-size:10px;line-height:10px;transform:scaleX(0.9100);transform-origin:0 0;color:#222;">0.00</div><div class="r" style="left:1142px;top:525px;width:40px;height:15px;background:#fdfbe4;border-right:1px solid #cfcfcf;border-bottom:1px solid #cfcfcf;box-sizing:border-box;"></div><div class="t" style="left:1147.93px;top:528.53px;font-size:10px;line-height:10px;transform:scaleX(0.9306);transform-origin:0 0;color:#222;">Rs  100</div><div class="r" style="left:1182px;top:525px;width:100px;height:15px;background:#fdfbe4;border-right:1px solid #cfcfcf;border-bottom:1px solid #cfcfcf;box-sizing:border-box;"></div><div class="t" style="left:1235.28px;top:528.53px;font-size:10px;line-height:10px;transform:scaleX(0.9247);transform-origin:0 0;color:#222;">Rs  200.00</div><div class="r" style="left:173px;top:540px;width:18px;height:16px;background:#fdfbe4;border-right:1px solid #cfcfcf;border-bottom:1px solid #cfcfcf;box-sizing:border-box;"></div><div class="t" style="left:183.94px;top:543.53px;font-size:10px;line-height:10px;transform:scaleX(0.9100);transform-origin:0 0;color:#222;">2</div><div class="r" style="left:191px;top:540px;width:29px;height:16px;background:#f4f46a;border-right:1px solid #cfcfcf;border-bottom:1px solid #cfcfcf;box-sizing:border-box;"></div><div class="t" style="left:207.88px;top:543.53px;font-size:10px;line-height:10px;transform:scaleX(0.9100);transform-origin:0 0;color:#222;">66</div><div class="r" style="left:220px;top:540px;width:83px;height:16px;background:#fdfbe4;border-right:1px solid #cfcfcf;border-bottom:1px solid #cfcfcf;box-sizing:border-box;"></div><div class="t" style="left:222.00px;top:543.53px;font-size:10px;line-height:10px;transform:scaleX(0.9500);transform-origin:0 0;color:#222;">CANES</div><div class="r" style="left:303px;top:540px;width:210px;height:16px;background:#ffffff;border-right:1px solid #cfcfcf;border-bottom:1px solid #cfcfcf;box-sizing:border-box;"></div><div class="t" style="left:305.00px;top:543.53px;font-size:10px;line-height:10px;transform:scaleX(0.9428);transform-origin:0 0;color:#222;">Bigdrum Sugar Cones(855/case)</div><div class="r" style="left:513px;top:540px;width:76px;height:16px;background:#ffffff;border-right:1px solid #cfcfcf;border-bottom:1px solid #cfcfcf;box-sizing:border-box;"></div><div class="t" style="left:515.00px;top:543.53px;font-size:10px;line-height:10px;transform:scaleX(0.9500);transform-origin:0 0;color:#222;">Stock</div><div class="r" style="left:589px;top:540px;width:40px;height:16px;background:#ffffff;border-right:1px solid #cfcfcf;border-bottom:1px solid #cfcfcf;box-sizing:border-box;"></div><div class="t" style="left:621.94px;top:543.53px;font-size:10px;line-height:10px;transform:scaleX(0.9100);transform-origin:0 0;color:#222;">1</div><div class="r" style="left:629px;top:540px;width:41px;height:16px;background:#ffffff;border-right:1px solid #cfcfcf;border-bottom:1px solid #cfcfcf;box-sizing:border-box;"></div><div class="t" style="left:662.94px;top:543.53px;font-size:10px;line-height:10px;transform:scaleX(0.9100);transform-origin:0 0;color:#222;">0</div><div class="r" style="left:670px;top:540px;width:69px;height:16px;background:#ffffff;border-right:1px solid #cfcfcf;border-bottom:1px solid #cfcfcf;box-sizing:border-box;"></div><div class="t" style="left:692.28px;top:543.53px;font-size:10px;line-height:10px;transform:scaleX(0.9247);transform-origin:0 0;color:#222;">Rs  150.00</div><div class="r" style="left:739px;top:540px;width:67px;height:16px;background:#ffffff;border-right:1px solid #cfcfcf;border-bottom:1px solid #cfcfcf;box-sizing:border-box;"></div><div class="t" style="left:741.00px;top:543.53px;font-size:10px;line-height:10px;transform:scaleX(0.9500);transform-origin:0 0;color:#222;">EA</div><div class="r" style="left:806px;top:540px;width:43px;height:16px;background:#ffffff;border-right:1px solid #cfcfcf;border-bottom:1px solid #cfcfcf;box-sizing:border-box;"></div><div class="t" style="left:841.94px;top:543.53px;font-size:10px;line-height:10px;transform:scaleX(0.9100);transform-origin:0 0;color:#222;">0</div><div class="r" style="left:849px;top:540px;width:88px;height:16px;background:#ffffff;border-right:1px solid #cfcfcf;border-bottom:1px solid #cfcfcf;box-sizing:border-box;"></div><div class="t" style="left:900.40px;top:543.53px;font-size:10px;line-height:10px;transform:scaleX(0.9291);transform-origin:0 0;color:#222;">Rs  0.00</div><div class="r" style="left:937px;top:540px;width:80px;height:16px;background:#ffffff;border-right:1px solid #cfcfcf;border-bottom:1px solid #cfcfcf;box-sizing:border-box;"></div><div class="r" style="left:1017px;top:540px;width:73px;height:16px;background:#ffffff;border-right:1px solid #cfcfcf;border-bottom:1px solid #cfcfcf;box-sizing:border-box;"></div><div class="t" style="left:1053.40px;top:543.53px;font-size:10px;line-height:10px;transform:scaleX(0.9291);transform-origin:0 0;color:#222;">Rs  0.00</div><div class="r" style="left:1090px;top:540px;width:52px;height:16px;background:#ffffff;border-right:1px solid #cfcfcf;border-bottom:1px solid #cfcfcf;box-sizing:border-box;"></div><div class="t" style="left:1122.29px;top:543.53px;font-size:10px;line-height:10px;transform:scaleX(0.9100);transform-origin:0 0;color:#222;">0.00</div><div class="r" style="left:1142px;top:540px;width:40px;height:16px;background:#ffffff;border-right:1px solid #cfcfcf;border-bottom:1px solid #cfcfcf;box-sizing:border-box;"></div><div class="t" style="left:1147.93px;top:543.53px;font-size:10px;line-height:10px;transform:scaleX(0.9306);transform-origin:0 0;color:#222;">Rs  150</div><div class="r" style="left:1182px;top:540px;width:100px;height:16px;background:#fdfbe4;border-right:1px solid #cfcfcf;border-bottom:1px solid #cfcfcf;box-sizing:border-box;"></div><div class="t" style="left:1235.28px;top:543.53px;font-size:10px;line-height:10px;transform:scaleX(0.9247);transform-origin:0 0;color:#222;">Rs  150.00</div><div class="r" style="left:173px;top:556px;width:18px;height:15px;background:#fdfbe4;border-right:1px solid #cfcfcf;border-bottom:1px solid #cfcfcf;box-sizing:border-box;"></div><div class="t" style="left:183.94px;top:559.53px;font-size:10px;line-height:10px;transform:scaleX(0.9100);transform-origin:0 0;color:#222;">3</div><div class="r" style="left:191px;top:556px;width:29px;height:15px;background:#fdfbe4;border-right:1px solid #cfcfcf;border-bottom:1px solid #cfcfcf;box-sizing:border-box;"></div><div class="t" style="left:212.94px;top:559.53px;font-size:10px;line-height:10px;transform:scaleX(0.9100);transform-origin:0 0;color:#222;">0</div><div class="r" style="left:220px;top:556px;width:83px;height:15px;background:#fdfbe4;border-right:1px solid #cfcfcf;border-bottom:1px solid #cfcfcf;box-sizing:border-box;"></div><div class="t" style="left:222.00px;top:559.53px;font-size:10px;line-height:10px;transform:scaleX(0.9500);transform-origin:0 0;color:#222;">Shipping</div><div class="r" style="left:303px;top:556px;width:210px;height:15px;background:#fdfbe4;border-right:1px solid #cfcfcf;border-bottom:1px solid #cfcfcf;box-sizing:border-box;"></div><div class="t" style="left:305.00px;top:559.53px;font-size:10px;line-height:10px;transform:scaleX(0.9500);transform-origin:0 0;color:#222;">Shipping Charges</div><div class="r" style="left:513px;top:556px;width:76px;height:15px;background:#fdfbe4;border-right:1px solid #cfcfcf;border-bottom:1px solid #cfcfcf;box-sizing:border-box;"></div><div class="t" style="left:515.00px;top:559.53px;font-size:10px;line-height:10px;transform:scaleX(0.9500);transform-origin:0 0;color:#222;">Service</div><div class="r" style="left:589px;top:556px;width:40px;height:15px;background:#fdfbe4;border-right:1px solid #cfcfcf;border-bottom:1px solid #cfcfcf;box-sizing:border-box;"></div><div class="t" style="left:621.94px;top:559.53px;font-size:10px;line-height:10px;transform:scaleX(0.9100);transform-origin:0 0;color:#222;">1</div><div class="r" style="left:629px;top:556px;width:41px;height:15px;background:#fdfbe4;border-right:1px solid #cfcfcf;border-bottom:1px solid #cfcfcf;box-sizing:border-box;"></div><div class="t" style="left:662.94px;top:559.53px;font-size:10px;line-height:10px;transform:scaleX(0.9100);transform-origin:0 0;color:#222;">0</div><div class="r" style="left:670px;top:556px;width:69px;height:15px;background:#fdfbe4;border-right:1px solid #cfcfcf;border-bottom:1px solid #cfcfcf;box-sizing:border-box;"></div><div class="t" style="left:702.40px;top:559.53px;font-size:10px;line-height:10px;transform:scaleX(0.9291);transform-origin:0 0;color:#222;">Rs  0.00</div><div class="r" style="left:739px;top:556px;width:67px;height:15px;background:#fdfbe4;border-right:1px solid #cfcfcf;border-bottom:1px solid #cfcfcf;box-sizing:border-box;"></div><div class="t" style="left:741.00px;top:559.53px;font-size:10px;line-height:10px;transform:scaleX(0.9500);transform-origin:0 0;color:#222;">EA</div><div class="r" style="left:806px;top:556px;width:43px;height:15px;background:#fdfbe4;border-right:1px solid #cfcfcf;border-bottom:1px solid #cfcfcf;box-sizing:border-box;"></div><div class="t" style="left:840.66px;top:559.53px;font-size:10px;line-height:10px;transform:scaleX(0.9500);transform-origin:0 0;color:#222;">X</div><div class="r" style="left:849px;top:556px;width:88px;height:15px;background:#fdfbe4;border-right:1px solid #cfcfcf;border-bottom:1px solid #cfcfcf;box-sizing:border-box;"></div><div class="t" style="left:900.40px;top:559.53px;font-size:10px;line-height:10px;transform:scaleX(0.9291);transform-origin:0 0;color:#222;">Rs  0.00</div><div class="r" style="left:937px;top:556px;width:80px;height:15px;background:#fdfbe4;border-right:1px solid #cfcfcf;border-bottom:1px solid #cfcfcf;box-sizing:border-box;"></div><div class="r" style="left:1017px;top:556px;width:73px;height:15px;background:#fdfbe4;border-right:1px solid #cfcfcf;border-bottom:1px solid #cfcfcf;box-sizing:border-box;"></div><div class="t" style="left:1053.40px;top:559.53px;font-size:10px;line-height:10px;transform:scaleX(0.9291);transform-origin:0 0;color:#222;">Rs  0.00</div><div class="r" style="left:1090px;top:556px;width:52px;height:15px;background:#fdfbe4;border-right:1px solid #cfcfcf;border-bottom:1px solid #cfcfcf;box-sizing:border-box;"></div><div class="t" style="left:1122.29px;top:559.53px;font-size:10px;line-height:10px;transform:scaleX(0.9100);transform-origin:0 0;color:#222;">0.00</div><div class="r" style="left:1142px;top:556px;width:40px;height:15px;background:#fdfbe4;border-right:1px solid #cfcfcf;border-bottom:1px solid #cfcfcf;box-sizing:border-box;"></div><div class="t" style="left:1158.05px;top:559.53px;font-size:10px;line-height:10px;transform:scaleX(0.9405);transform-origin:0 0;color:#222;">Rs  0</div><div class="r" style="left:1182px;top:556px;width:100px;height:15px;background:#fdfbe4;border-right:1px solid #cfcfcf;border-bottom:1px solid #cfcfcf;box-sizing:border-box;"></div><div class="t" style="left:1245.40px;top:559.53px;font-size:10px;line-height:10px;transform:scaleX(0.9291);transform-origin:0 0;color:#222;">Rs  0.00</div><div class="r" style="left:302px;top:509px;width:2px;height:62px;background:#444;"></div><div class="r" style="left:1181px;top:509px;width:2px;height:62px;background:#333;"></div><div class="r" style="left:173px;top:571px;width:1107px;height:19px;background:#ffffff;"></div><div class="r" style="left:173px;top:590px;width:1107px;height:13px;background:#f9f7f9;"></div><div class="r" style="left:173px;top:590px;width:424px;height:13px;background:#f4f0f4;border-right:1.5px solid #6a6a6a;border-bottom:2px solid #6a6a6a;box-sizing:border-box;"></div><div class="r" style="left:184px;top:590px;width:2px;height:12px;background:#666;"></div><svg class="r" style="left:176px;top:592px;" width="5" height="7" viewBox="0 0 5 7"><path d="M4.5 0v7L0 3.5z" fill="#111"/></svg><svg class="r" style="left:1275px;top:593px;" width="5" height="7" viewBox="0 0 5 7"><path d="M0 0v7l4.5-3.5z" fill="#111"/></svg><div class="r" style="left:1272px;top:602px;width:8px;height:1px;background:#777;"></div><div class="r" style="left:172px;top:603px;width:1108px;height:2px;background:#e4e4e4;"></div><div class="r" style="left:172px;top:509px;width:1px;height:94px;background:#777;"></div><div class="r" style="left:172px;top:605px;width:1088px;height:15px;background:#a5c3ec;"></div><div class="t" style="left:174.00px;top:607.53px;font-size:10px;line-height:10px;font-weight:bold;transform:scaleX(0.9424);transform-origin:0 0;color:#1a1a3a;">Transaction Amounts</div><div class="r" style="left:1259px;top:605px;width:12px;height:15px;background:#f8f8f8;border-right:1px solid #aaa;border-bottom:2px solid #999;box-sizing:border-box;"></div><div class="t" style="left:1260.00px;top:607.53px;font-size:10px;line-height:10px;font-weight:bold;transform:scaleX(0.9000);transform-origin:0 0;color:#1a1a4a;">H</div><div class="r" style="left:1266px;top:611px;width:2px;height:2px;background:#333;"></div><div class="r" style="left:1271px;top:605px;width:9px;height:15px;background:#f8f8f8;border-left:1px solid #999;border-bottom:2px solid #999;box-sizing:border-box;"></div><div class="t" style="left:1273.00px;top:607.53px;font-size:10px;line-height:10px;font-weight:bold;transform:scaleX(0.9745);transform-origin:0 0;color:#3a1a3a;">P</div><div class="t" style="left:172.00px;top:624.53px;font-size:10px;line-height:10px;transform:scaleX(0.9284);transform-origin:0 0;color:#222;">Taxable</div><div class="r" style="left:209px;top:621px;width:95px;height:16px;background:#fdfbe4;border:1px solid #ccc;border-right-color:#e4e4e4;border-bottom-color:#e4e4e4;box-sizing:border-box;"></div><div class="t" style="left:253.00px;top:624.53px;font-size:10px;line-height:10px;transform:scaleX(0.9511);transform-origin:0 0;color:#222;">Rs  350.00</div><div class="t" style="left:327.00px;top:624.53px;font-size:10px;line-height:10px;transform:scaleX(0.8996);transform-origin:0 0;color:#222;">Tax</div><div class="r" style="left:348px;top:621px;width:80px;height:16px;background:#fdfbe4;border:1px solid #ccc;border-right-color:#e4e4e4;border-bottom-color:#e4e4e4;box-sizing:border-box;"></div><div class="t" style="left:383.00px;top:624.53px;font-size:10px;line-height:10px;transform:scaleX(0.9579);transform-origin:0 0;color:#222;">Rs  63.00</div><div class="r" style="left:430px;top:621px;width:16px;height:17px;background:#eee;border:1px solid #aaa;border-top-color:#fff;border-left-color:#fff;box-sizing:border-box;"></div><div class="r" style="left:433px;top:624px;width:10px;height:10px;border-radius:50%;background:radial-gradient(circle at 40% 35%,#d8ecff,#3a8ae0);border:1px solid #2a6ab0;box-sizing:border-box;"></div><div class="t" style="left:477.00px;top:624.53px;font-size:10px;line-height:10px;transform:scaleX(0.9204);transform-origin:0 0;color:#222;">Non Taxable</div><div class="r" style="left:534px;top:621px;width:94px;height:16px;background:#fdfbe4;border:1px solid #ccc;border-right-color:#e4e4e4;border-bottom-color:#e4e4e4;box-sizing:border-box;"></div><div class="t" style="left:588.00px;top:624.53px;font-size:10px;line-height:10px;transform:scaleX(0.9667);transform-origin:0 0;color:#222;">Rs  0.00</div><div class="t" style="left:646.00px;top:624.53px;font-size:10px;line-height:10px;transform:scaleX(0.8995);transform-origin:0 0;color:#222;">Total</div><div class="r" style="left:671px;top:621px;width:95px;height:16px;background:#fdfbe4;border:1px solid #ccc;border-right-color:#e4e4e4;border-bottom-color:#e4e4e4;box-sizing:border-box;"></div><div class="t" style="left:716.00px;top:624.53px;font-size:10px;line-height:10px;transform:scaleX(0.9511);transform-origin:0 0;color:#222;">Rs  413.00</div><div class="t" style="left:472.00px;top:646.53px;font-size:10px;line-height:10px;transform:scaleX(0.9438);transform-origin:0 0;color:#222;">Deposit</div><div class="r" style="left:513px;top:643px;width:83px;height:16px;background:#fdfbe4;border:1px solid #ccc;border-right-color:#e4e4e4;border-bottom-color:#e4e4e4;box-sizing:border-box;"></div><div class="t" style="left:556.00px;top:646.53px;font-size:10px;line-height:10px;transform:scaleX(0.9667);transform-origin:0 0;color:#222;">Rs  0.00</div><div class="r" style="left:598px;top:643px;width:15px;height:17px;background:#f0f0f0;border:1px solid #aaa;border-top-color:#fff;border-left-color:#fff;box-sizing:border-box;"></div><div class="t" style="left:627.00px;top:646.53px;font-size:10px;line-height:10px;transform:scaleX(0.9408);transform-origin:0 0;color:#222;">Balance</div><div class="r" style="left:664px;top:643px;width:102px;height:16px;background:#ccefb8;border:1px solid #ccc;border-right-color:#e4e4e4;border-bottom-color:#e4e4e4;box-sizing:border-box;"></div><div class="t" style="left:716.00px;top:646.53px;font-size:10px;line-height:10px;transform:scaleX(0.9511);transform-origin:0 0;color:#222;">Rs  413.00</div><div class="r" style="left:225px;top:420px;width:137px;height:26px;border:2px solid #e8303a;box-sizing:border-box;box-shadow:1px 1px 2px rgba(0,0,0,.3);"></div><div class="r" style="left:74.25px;top:16.5px;width:24px;height:24px;border-radius:50%;background:#f03c40;box-shadow:1px 2px 2px rgba(0,0,0,.3);"></div><div class="t" style="left:81.52px;top:20.31px;font-size:17px;line-height:17px;color:#fff;-webkit-text-stroke:0.25px #fff;">1</div><div class="r" style="left:9.5px;top:121px;width:22px;height:22px;border-radius:50%;background:#f03c40;box-shadow:1px 2px 2px rgba(0,0,0,.3);"></div><div class="t" style="left:15.77px;top:123.81px;font-size:17px;line-height:17px;color:#fff;-webkit-text-stroke:0.25px #fff;">2</div><div class="r" style="left:144.8px;top:256.0px;width:23.4px;height:23.4px;border-radius:50%;background:#f03c40;box-shadow:1px 2px 2px rgba(0,0,0,.3);"></div><div class="t" style="left:151.77px;top:259.51px;font-size:17px;line-height:17px;color:#fff;-webkit-text-stroke:0.25px #fff;">3</div><div class="r" style="left:167.8px;top:422.3px;width:23.4px;height:23.4px;border-radius:50%;background:#f03c40;box-shadow:1px 2px 2px rgba(0,0,0,.3);"></div><div class="t" style="left:174.77px;top:425.81px;font-size:17px;line-height:17px;color:#fff;-webkit-text-stroke:0.25px #fff;">4</div></body></html>
